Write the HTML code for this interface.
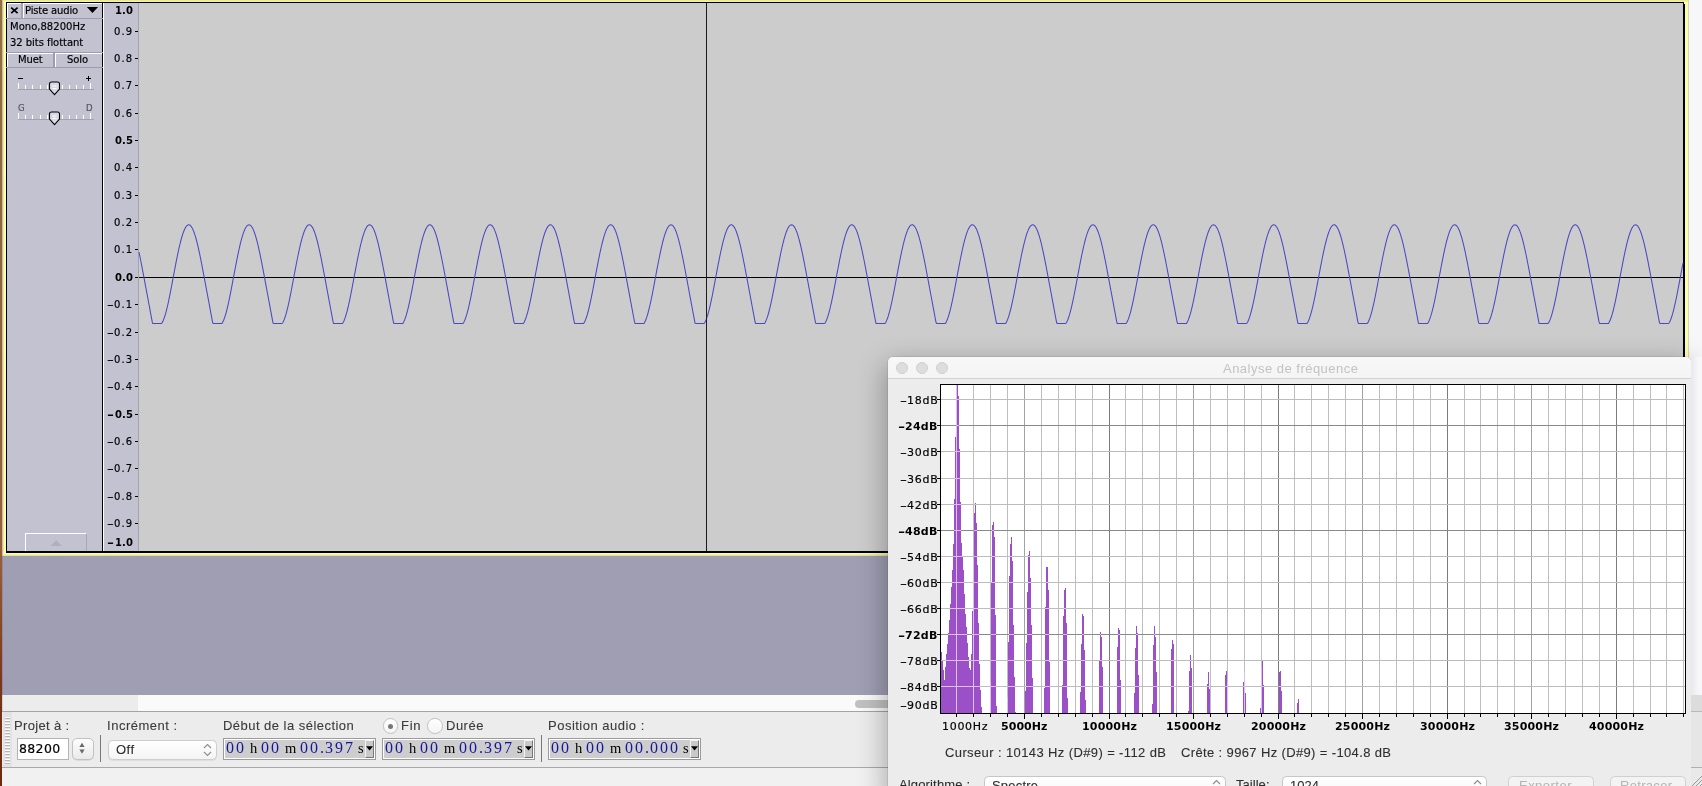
<!DOCTYPE html>
<html lang="fr"><head><meta charset="utf-8"><title>Audacity - Analyse de fréquence</title>
<style>
html,body{margin:0;padding:0}
body{width:1702px;height:786px;overflow:hidden;position:relative;background:#9f9eb3}
#app{position:absolute;left:0;top:0;width:1702px;height:786px;overflow:hidden}
#app div,#app svg,#app span{position:absolute}
#app span{white-space:pre;line-height:1;display:block;will-change:transform}
</style></head>
<body><div id="app">
<div style="left:0px;top:0px;width:2px;height:786px;background:linear-gradient(#96703c 0%,#8f6234 45%,#9a6038 70%,#7a3416 88%,#6e2810 100%)"></div>
<div style="left:2px;top:0px;width:1px;height:556px;background:#c4c0ac"></div>
<div style="left:2px;top:556px;width:1px;height:139px;background:#908b9e"></div>
<div style="left:2px;top:695px;width:1px;height:91px;background:#d2d2d4"></div>
<div style="left:3px;top:0px;width:1685px;height:556px;background:#ffffaa"></div>
<div style="left:3px;top:0px;width:1px;height:556px;background:#e6e6b4"></div>
<div style="left:3px;top:553px;width:1685px;height:3px;background:linear-gradient(#ffffb4,#f2f2a2 50%,#d8d89c)"></div>
<div style="left:3px;top:0px;width:1685px;height:2px;background:linear-gradient(#e4e48c,#fbfbaa)"></div>
<div style="left:6px;top:2px;width:1679px;height:551px;background:#000"></div>
<div style="left:7px;top:3px;width:95px;height:548px;background:#c3c2d0"></div>
<div style="left:103px;top:3px;width:1px;height:548px;background:#fff"></div>
<div style="left:104px;top:3px;width:34px;height:548px;background:#c3c2d0"></div>
<div style="left:138px;top:3px;width:1px;height:548px;background:#a4a3b0"></div>
<div style="left:139px;top:3px;width:1544px;height:548px;background:#cccccc"></div>
<div style="left:1684px;top:2px;width:1px;height:1.5px;background:#ffffaa"></div>
<div style="left:1688px;top:0px;width:14px;height:695px;background:#f7f7fa"></div>
<div style="left:1688px;top:0px;width:1px;height:556px;background:#d4d4c0"></div>
<div style="left:3px;top:556px;width:1685px;height:139px;background:#9f9eb3"></div>
<div style="left:3px;top:695px;width:135px;height:16px;background:#ececec"></div>
<div style="left:138px;top:695px;width:1550px;height:16px;background:#fafafa"></div>
<div style="left:855px;top:700px;width:60px;height:8px;background:#c1c1c1;border-radius:4px"></div>
<div style="left:1688px;top:695px;width:14px;height:16px;background:#dedede"></div>
<div style="left:2px;top:711px;width:1700px;height:1px;background:#a3a3a8"></div>
<div style="left:2px;top:712px;width:1700px;height:55px;background:#ececec"></div>
<div style="left:2px;top:767px;width:1700px;height:1px;background:#a9a9ad"></div>
<div style="left:2px;top:768px;width:1700px;height:18px;background:#f1f1f1"></div>
<div style="left:3px;top:712px;width:9px;height:55px;background:#e3e3e6"></div>
<div style="left:5px;top:717px;width:5px;height:1px;background:#fff"></div>
<div style="left:5px;top:718px;width:5px;height:1px;background:#b4b4ba"></div>
<div style="left:5px;top:720px;width:5px;height:1px;background:#fff"></div>
<div style="left:5px;top:721px;width:5px;height:1px;background:#b4b4ba"></div>
<div style="left:5px;top:723px;width:5px;height:1px;background:#fff"></div>
<div style="left:5px;top:724px;width:5px;height:1px;background:#b4b4ba"></div>
<div style="left:5px;top:726px;width:5px;height:1px;background:#fff"></div>
<div style="left:5px;top:727px;width:5px;height:1px;background:#b4b4ba"></div>
<div style="left:5px;top:729px;width:5px;height:1px;background:#fff"></div>
<div style="left:5px;top:730px;width:5px;height:1px;background:#b4b4ba"></div>
<div style="left:5px;top:732px;width:5px;height:1px;background:#fff"></div>
<div style="left:5px;top:733px;width:5px;height:1px;background:#b4b4ba"></div>
<div style="left:5px;top:735px;width:5px;height:1px;background:#fff"></div>
<div style="left:5px;top:736px;width:5px;height:1px;background:#b4b4ba"></div>
<div style="left:5px;top:738px;width:5px;height:1px;background:#fff"></div>
<div style="left:5px;top:739px;width:5px;height:1px;background:#b4b4ba"></div>
<div style="left:5px;top:741px;width:5px;height:1px;background:#fff"></div>
<div style="left:5px;top:742px;width:5px;height:1px;background:#b4b4ba"></div>
<div style="left:5px;top:744px;width:5px;height:1px;background:#fff"></div>
<div style="left:5px;top:745px;width:5px;height:1px;background:#b4b4ba"></div>
<div style="left:5px;top:747px;width:5px;height:1px;background:#fff"></div>
<div style="left:5px;top:748px;width:5px;height:1px;background:#b4b4ba"></div>
<div style="left:5px;top:750px;width:5px;height:1px;background:#fff"></div>
<div style="left:5px;top:751px;width:5px;height:1px;background:#b4b4ba"></div>
<div style="left:5px;top:753px;width:5px;height:1px;background:#fff"></div>
<div style="left:5px;top:754px;width:5px;height:1px;background:#b4b4ba"></div>
<div style="left:5px;top:756px;width:5px;height:1px;background:#fff"></div>
<div style="left:5px;top:757px;width:5px;height:1px;background:#b4b4ba"></div>
<div style="left:5px;top:759px;width:5px;height:1px;background:#fff"></div>
<div style="left:5px;top:760px;width:5px;height:1px;background:#b4b4ba"></div>
<div style="left:5px;top:762px;width:5px;height:1px;background:#fff"></div>
<div style="left:5px;top:763px;width:5px;height:1px;background:#b4b4ba"></div>
<div style="left:7px;top:3px;width:14px;height:15px;background:#c3c2d0;border-left:1px solid #fff;border-top:1px solid #fff;box-sizing:border-box"></div>
<div style="left:21px;top:3px;width:2px;height:15px;background:#a3a2b2"></div>
<div style="left:23px;top:3px;width:79px;height:15px;background:#c3c2d0;border-left:1px solid #fff;border-top:1px solid #fff;box-sizing:border-box"></div>
<div style="left:6px;top:17.5px;width:97px;height:1px;background:#9d9cac"></div>
<svg style="left:10px;top:6px" width="9" height="9" viewBox="0 0 9 9"><path d="M1.2 1.6 L7.6 7.2 M7.6 1.6 L1.2 7.2" stroke="#000" stroke-width="1.7" fill="none"/></svg>
<span id="t0" style="font-family:'DejaVu Sans', sans-serif;font-size:10px;font-weight:400;color:#000;letter-spacing:-0.157px;left:24.90px;top:5.60px;-webkit-text-stroke:0.18px #000;">Piste audio</span>
<svg style="left:86px;top:6px" width="13" height="8" viewBox="0 0 13 8"><path d="M0.8 1 L12.1 1 L6.45 7.1 Z" fill="#000"/></svg>
<span id="t1" style="font-family:'DejaVu Sans', sans-serif;font-size:10px;font-weight:400;color:#000;letter-spacing:0.021px;left:9.80px;top:22.20px;-webkit-text-stroke:0.18px #000;">Mono,88200Hz</span>
<span id="t2" style="font-family:'DejaVu Sans', sans-serif;font-size:10px;font-weight:400;color:#000;letter-spacing:-0.052px;left:9.80px;top:38.10px;-webkit-text-stroke:0.18px #000;">32 bits flottant</span>
<div style="left:6px;top:52px;width:97px;height:1px;background:#9d9cac"></div>
<div style="left:7px;top:53px;width:46px;height:14px;background:#c3c2d0;border-left:1px solid #fff;border-top:1px solid #fff;box-sizing:border-box"></div>
<div style="left:53px;top:53px;width:2px;height:15px;background:#9d9cac"></div>
<div style="left:55px;top:53px;width:47px;height:14px;background:#c3c2d0;border-left:1px solid #fff;border-top:1px solid #fff;box-sizing:border-box"></div>
<div style="left:6px;top:67px;width:97px;height:1px;background:#9d9cac"></div>
<span id="t3" style="font-family:'DejaVu Sans', sans-serif;font-size:10px;font-weight:400;color:#000;letter-spacing:-0.149px;left:17.80px;top:55.00px;-webkit-text-stroke:0.18px #000;">Muet</span>
<span id="t4" style="font-family:'DejaVu Sans', sans-serif;font-size:10px;font-weight:400;color:#000;letter-spacing:-0.058px;left:66.60px;top:55.00px;-webkit-text-stroke:0.18px #000;">Solo</span>
<div style="left:18px;top:89px;width:76px;height:1px;background:#a2a1ae"></div><div style="left:18px;top:83px;width:1px;height:6px;background:#fff"></div><div style="left:25px;top:85px;width:1px;height:4px;background:#fff"></div><div style="left:32px;top:85px;width:1px;height:4px;background:#fff"></div><div style="left:40px;top:85px;width:1px;height:4px;background:#fff"></div><div style="left:47px;top:85px;width:1px;height:4px;background:#fff"></div><div style="left:54px;top:85px;width:1px;height:4px;background:#fff"></div><div style="left:62px;top:85px;width:1px;height:4px;background:#fff"></div><div style="left:69px;top:85px;width:1px;height:4px;background:#fff"></div><div style="left:76px;top:85px;width:1px;height:4px;background:#fff"></div><div style="left:83px;top:85px;width:1px;height:4px;background:#fff"></div><div style="left:90px;top:83px;width:1px;height:6px;background:#fff"></div><svg style="left:48px;top:81px" width="13" height="15" viewBox="0 0 13 15"><path d="M1.5 3 Q1.5 1 3.5 1 L9.5 1 Q11.5 1 11.5 3 L11.5 8 L6.5 13.6 L1.5 8 Z" fill="#d9d8e4" stroke="#000" stroke-width="1.1"/><path d="M4.5 5 H8.5 M4.5 7.5 H8.5" stroke="#fff" stroke-width="1"/></svg>
<div style="left:18px;top:119px;width:76px;height:1px;background:#a2a1ae"></div><div style="left:18px;top:113px;width:1px;height:6px;background:#fff"></div><div style="left:25px;top:115px;width:1px;height:4px;background:#fff"></div><div style="left:32px;top:115px;width:1px;height:4px;background:#fff"></div><div style="left:40px;top:115px;width:1px;height:4px;background:#fff"></div><div style="left:47px;top:115px;width:1px;height:4px;background:#fff"></div><div style="left:54px;top:115px;width:1px;height:4px;background:#fff"></div><div style="left:62px;top:115px;width:1px;height:4px;background:#fff"></div><div style="left:69px;top:115px;width:1px;height:4px;background:#fff"></div><div style="left:76px;top:115px;width:1px;height:4px;background:#fff"></div><div style="left:83px;top:115px;width:1px;height:4px;background:#fff"></div><div style="left:90px;top:113px;width:1px;height:6px;background:#fff"></div><svg style="left:48px;top:111px" width="13" height="15" viewBox="0 0 13 15"><path d="M1.5 3 Q1.5 1 3.5 1 L9.5 1 Q11.5 1 11.5 3 L11.5 8 L6.5 13.6 L1.5 8 Z" fill="#d9d8e4" stroke="#000" stroke-width="1.1"/><path d="M4.5 5 H8.5 M4.5 7.5 H8.5" stroke="#fff" stroke-width="1"/></svg>
<div style="left:18px;top:77.8px;width:5px;height:1.2px;background:#000"></div>
<div style="left:86px;top:78px;width:5.2px;height:1.2px;background:#000"></div>
<div style="left:88px;top:76px;width:1.2px;height:5.2px;background:#000"></div>
<span id="t5" style="font-family:'DejaVu Sans', sans-serif;font-size:8.6px;font-weight:400;color:#55555f;left:18.00px;top:103.80px;-webkit-text-stroke:0.18px #55555f;">G</span>
<span id="t6" style="font-family:'DejaVu Sans', sans-serif;font-size:8.6px;font-weight:400;color:#55555f;left:85.60px;top:103.80px;-webkit-text-stroke:0.18px #55555f;">D</span>
<div style="left:25px;top:533px;width:62px;height:18px;background:#c3c2d0;border-left:1px solid #fff;border-top:1px solid #fff;border-right:1px solid #a9a8b6;box-sizing:border-box"></div>
<svg style="left:50px;top:540px" width="13" height="7" viewBox="0 0 13 7"><path d="M0.5 6 L12 6 L6.25 0.3 Z" fill="#b0afbf"/></svg>
<span id="t7" style="font-family:'DejaVu Sans', sans-serif;font-size:10px;font-weight:700;color:#000;letter-spacing:0.141px;left:114.50px;top:538.20px;">1.0</span>
<span id="t8" style="font-family:'DejaVu Sans', sans-serif;font-size:10px;font-weight:700;color:#000;transform-origin:0 50%;transform:scaleX(1.684);left:107.20px;top:538.20px;">-</span>
<div style="left:135px;top:523px;width:3px;height:1px;background:#000"></div>
<span id="t9" style="font-family:'DejaVu Sans', sans-serif;font-size:10px;font-weight:400;color:#000;letter-spacing:1.147px;left:113.90px;top:519.04px;-webkit-text-stroke:0.18px #000;">0.9</span>
<span id="t10" style="font-family:'DejaVu Sans', sans-serif;font-size:10px;font-weight:400;color:#000;transform-origin:0 50%;transform:scaleX(1.884);left:106.90px;top:519.04px;-webkit-text-stroke:0.18px #000;">-</span>
<div style="left:135px;top:496px;width:3px;height:1px;background:#000"></div>
<span id="t11" style="font-family:'DejaVu Sans', sans-serif;font-size:10px;font-weight:400;color:#000;letter-spacing:1.147px;left:113.90px;top:491.68px;-webkit-text-stroke:0.18px #000;">0.8</span>
<span id="t12" style="font-family:'DejaVu Sans', sans-serif;font-size:10px;font-weight:400;color:#000;transform-origin:0 50%;transform:scaleX(1.884);left:106.90px;top:491.68px;-webkit-text-stroke:0.18px #000;">-</span>
<div style="left:135px;top:468px;width:3px;height:1px;background:#000"></div>
<span id="t13" style="font-family:'DejaVu Sans', sans-serif;font-size:10px;font-weight:400;color:#000;letter-spacing:1.147px;left:113.90px;top:464.32px;-webkit-text-stroke:0.18px #000;">0.7</span>
<span id="t14" style="font-family:'DejaVu Sans', sans-serif;font-size:10px;font-weight:400;color:#000;transform-origin:0 50%;transform:scaleX(1.884);left:106.90px;top:464.32px;-webkit-text-stroke:0.18px #000;">-</span>
<div style="left:135px;top:441px;width:3px;height:1px;background:#000"></div>
<span id="t15" style="font-family:'DejaVu Sans', sans-serif;font-size:10px;font-weight:400;color:#000;letter-spacing:1.147px;left:113.90px;top:436.96px;-webkit-text-stroke:0.18px #000;">0.6</span>
<span id="t16" style="font-family:'DejaVu Sans', sans-serif;font-size:10px;font-weight:400;color:#000;transform-origin:0 50%;transform:scaleX(1.884);left:106.90px;top:436.96px;-webkit-text-stroke:0.18px #000;">-</span>
<div style="left:135px;top:414px;width:3px;height:1px;background:#000"></div>
<span id="t17" style="font-family:'DejaVu Sans', sans-serif;font-size:10px;font-weight:700;color:#000;letter-spacing:0.141px;left:114.50px;top:409.60px;">0.5</span>
<span id="t18" style="font-family:'DejaVu Sans', sans-serif;font-size:10px;font-weight:700;color:#000;transform-origin:0 50%;transform:scaleX(1.684);left:107.20px;top:409.60px;">-</span>
<div style="left:135px;top:386px;width:3px;height:1px;background:#000"></div>
<span id="t19" style="font-family:'DejaVu Sans', sans-serif;font-size:10px;font-weight:400;color:#000;letter-spacing:1.147px;left:113.90px;top:382.24px;-webkit-text-stroke:0.18px #000;">0.4</span>
<span id="t20" style="font-family:'DejaVu Sans', sans-serif;font-size:10px;font-weight:400;color:#000;transform-origin:0 50%;transform:scaleX(1.884);left:106.90px;top:382.24px;-webkit-text-stroke:0.18px #000;">-</span>
<div style="left:135px;top:359px;width:3px;height:1px;background:#000"></div>
<span id="t21" style="font-family:'DejaVu Sans', sans-serif;font-size:10px;font-weight:400;color:#000;letter-spacing:1.147px;left:113.90px;top:354.88px;-webkit-text-stroke:0.18px #000;">0.3</span>
<span id="t22" style="font-family:'DejaVu Sans', sans-serif;font-size:10px;font-weight:400;color:#000;transform-origin:0 50%;transform:scaleX(1.884);left:106.90px;top:354.88px;-webkit-text-stroke:0.18px #000;">-</span>
<div style="left:135px;top:332px;width:3px;height:1px;background:#000"></div>
<span id="t23" style="font-family:'DejaVu Sans', sans-serif;font-size:10px;font-weight:400;color:#000;letter-spacing:1.147px;left:113.90px;top:327.52px;-webkit-text-stroke:0.18px #000;">0.2</span>
<span id="t24" style="font-family:'DejaVu Sans', sans-serif;font-size:10px;font-weight:400;color:#000;transform-origin:0 50%;transform:scaleX(1.884);left:106.90px;top:327.52px;-webkit-text-stroke:0.18px #000;">-</span>
<div style="left:135px;top:304px;width:3px;height:1px;background:#000"></div>
<span id="t25" style="font-family:'DejaVu Sans', sans-serif;font-size:10px;font-weight:400;color:#000;letter-spacing:1.147px;left:113.90px;top:300.16px;-webkit-text-stroke:0.18px #000;">0.1</span>
<span id="t26" style="font-family:'DejaVu Sans', sans-serif;font-size:10px;font-weight:400;color:#000;transform-origin:0 50%;transform:scaleX(1.884);left:106.90px;top:300.16px;-webkit-text-stroke:0.18px #000;">-</span>
<div style="left:135px;top:277px;width:3px;height:1px;background:#000"></div>
<span id="t27" style="font-family:'DejaVu Sans', sans-serif;font-size:10px;font-weight:700;color:#000;letter-spacing:0.141px;left:114.50px;top:272.80px;">0.0</span>
<div style="left:135px;top:249px;width:3px;height:1px;background:#000"></div>
<span id="t28" style="font-family:'DejaVu Sans', sans-serif;font-size:10px;font-weight:400;color:#000;letter-spacing:1.147px;left:113.90px;top:245.44px;-webkit-text-stroke:0.18px #000;">0.1</span>
<div style="left:135px;top:222px;width:3px;height:1px;background:#000"></div>
<span id="t29" style="font-family:'DejaVu Sans', sans-serif;font-size:10px;font-weight:400;color:#000;letter-spacing:1.147px;left:113.90px;top:218.08px;-webkit-text-stroke:0.18px #000;">0.2</span>
<div style="left:135px;top:195px;width:3px;height:1px;background:#000"></div>
<span id="t30" style="font-family:'DejaVu Sans', sans-serif;font-size:10px;font-weight:400;color:#000;letter-spacing:1.147px;left:113.90px;top:190.72px;-webkit-text-stroke:0.18px #000;">0.3</span>
<div style="left:135px;top:167px;width:3px;height:1px;background:#000"></div>
<span id="t31" style="font-family:'DejaVu Sans', sans-serif;font-size:10px;font-weight:400;color:#000;letter-spacing:1.147px;left:113.90px;top:163.36px;-webkit-text-stroke:0.18px #000;">0.4</span>
<div style="left:135px;top:140px;width:3px;height:1px;background:#000"></div>
<span id="t32" style="font-family:'DejaVu Sans', sans-serif;font-size:10px;font-weight:700;color:#000;letter-spacing:0.141px;left:114.50px;top:136.00px;">0.5</span>
<div style="left:135px;top:113px;width:3px;height:1px;background:#000"></div>
<span id="t33" style="font-family:'DejaVu Sans', sans-serif;font-size:10px;font-weight:400;color:#000;letter-spacing:1.147px;left:113.90px;top:108.64px;-webkit-text-stroke:0.18px #000;">0.6</span>
<div style="left:135px;top:85px;width:3px;height:1px;background:#000"></div>
<span id="t34" style="font-family:'DejaVu Sans', sans-serif;font-size:10px;font-weight:400;color:#000;letter-spacing:1.147px;left:113.90px;top:81.28px;-webkit-text-stroke:0.18px #000;">0.7</span>
<div style="left:135px;top:58px;width:3px;height:1px;background:#000"></div>
<span id="t35" style="font-family:'DejaVu Sans', sans-serif;font-size:10px;font-weight:400;color:#000;letter-spacing:1.147px;left:113.90px;top:53.92px;-webkit-text-stroke:0.18px #000;">0.8</span>
<div style="left:135px;top:31px;width:3px;height:1px;background:#000"></div>
<span id="t36" style="font-family:'DejaVu Sans', sans-serif;font-size:10px;font-weight:400;color:#000;letter-spacing:1.147px;left:113.90px;top:26.56px;-webkit-text-stroke:0.18px #000;">0.9</span>
<span id="t37" style="font-family:'DejaVu Sans', sans-serif;font-size:10px;font-weight:700;color:#000;letter-spacing:0.141px;left:114.50px;top:6.10px;">1.0</span>
<svg style="left:0;top:0" width="1702" height="786" viewBox="0 0 1702 786"><rect x="139" y="277" width="1544" height="1" fill="#000" shape-rendering="crispEdges"/><polyline points="139.0,252.2 139.5,254.6 140.0,257.0 140.5,259.5 141.0,262.0 141.5,264.6 142.0,267.2 142.5,269.8 143.0,272.4 143.5,275.1 144.0,277.7 144.5,280.4 145.0,283.1 145.5,285.8 146.0,288.5 146.5,291.1 147.0,293.8 147.5,296.5 148.0,299.2 148.5,301.9 149.0,304.5 149.5,307.2 150.0,309.9 150.5,312.6 151.0,315.3 151.5,317.9 152.0,320.6 152.5,323.3 153.0,323.4 153.5,323.4 154.0,323.4 154.5,323.4 155.0,323.4 155.5,323.4 156.0,323.4 156.5,323.4 157.0,323.4 157.5,323.4 158.0,323.4 158.5,323.4 159.0,323.4 159.5,323.4 160.0,323.4 160.5,323.4 161.0,323.4 161.5,323.4 162.0,323.0 162.5,322.1 163.0,321.0 163.5,319.8 164.0,318.5 164.5,317.1 165.0,315.5 165.5,313.9 166.0,312.1 166.5,310.1 167.0,308.1 167.5,306.0 168.0,303.8 168.5,301.5 169.0,299.2 169.5,296.7 170.0,294.3 170.5,291.7 171.0,289.1 171.5,286.5 172.0,283.8 172.5,281.2 173.0,278.5 173.5,275.8 174.0,273.1 174.5,270.5 175.0,267.9 175.5,265.3 176.0,262.7 176.5,260.1 177.0,257.7 177.5,255.2 178.0,252.8 178.5,250.5 179.0,248.2 179.5,246.1 180.0,244.0 180.5,242.0 181.0,240.0 181.5,238.2 182.0,236.5 182.5,234.9 183.0,233.4 183.5,232.0 184.0,230.7 184.5,229.5 185.0,228.5 185.5,227.6 186.0,226.8 186.5,226.1 187.0,225.6 187.5,225.2 188.0,224.9 188.5,224.8 189.0,224.8 189.5,225.0 190.0,225.2 190.5,225.7 191.0,226.2 191.5,226.9 192.0,227.7 192.5,228.6 193.0,229.7 193.5,230.9 194.0,232.2 194.5,233.6 195.0,235.1 195.5,236.8 196.0,238.5 196.5,240.3 197.0,242.3 197.5,244.3 198.0,246.4 198.5,248.6 199.0,250.9 199.5,253.2 200.0,255.6 200.5,258.1 201.0,260.6 201.5,263.1 202.0,265.7 202.5,268.3 203.0,270.9 203.5,273.6 204.0,276.2 204.5,278.9 205.0,281.6 205.5,284.3 206.0,286.9 206.5,289.6 207.0,292.3 207.5,295.0 208.0,297.7 208.5,300.4 209.0,303.0 209.5,305.7 210.0,308.4 210.5,311.1 211.0,313.8 211.5,316.4 212.0,319.1 212.5,321.8 213.0,323.4 213.5,323.4 214.0,323.4 214.5,323.4 215.0,323.4 215.5,323.4 216.0,323.4 216.5,323.4 217.0,323.4 217.5,323.4 218.0,323.4 218.5,323.4 219.0,323.4 219.5,323.4 220.0,323.4 220.5,323.4 221.0,323.4 221.5,323.4 222.0,323.4 222.5,322.6 223.0,321.6 223.5,320.5 224.0,319.3 224.5,317.9 225.0,316.4 225.5,314.8 226.0,313.1 226.5,311.2 227.0,309.3 227.5,307.2 228.0,305.1 228.5,302.8 229.0,300.5 229.5,298.1 230.0,295.7 230.5,293.2 231.0,290.6 231.5,288.0 232.0,285.3 232.5,282.7 233.0,280.0 233.5,277.3 234.0,274.6 234.5,272.0 235.0,269.3 235.5,266.7 236.0,264.1 236.5,261.6 237.0,259.1 237.5,256.6 238.0,254.2 238.5,251.8 239.0,249.5 239.5,247.3 240.0,245.1 240.5,243.1 241.0,241.1 241.5,239.2 242.0,237.4 242.5,235.8 243.0,234.2 243.5,232.7 244.0,231.4 244.5,230.2 245.0,229.0 245.5,228.1 246.0,227.2 246.5,226.5 247.0,225.9 247.5,225.4 248.0,225.1 248.5,224.9 249.0,224.8 249.5,224.9 250.0,225.1 250.5,225.4 251.0,225.9 251.5,226.5 252.0,227.2 252.5,228.1 253.0,229.1 253.5,230.2 254.0,231.4 254.5,232.8 255.0,234.2 255.5,235.8 256.0,237.5 256.5,239.3 257.0,241.2 257.5,243.2 258.0,245.2 258.5,247.4 259.0,249.6 259.5,251.9 260.0,254.2 260.5,256.7 261.0,259.1 261.5,261.7 262.0,264.2 262.5,266.8 263.0,269.4 263.5,272.1 264.0,274.7 264.5,277.4 265.0,280.1 265.5,282.8 266.0,285.4 266.5,288.1 267.0,290.8 267.5,293.5 268.0,296.2 268.5,298.8 269.0,301.5 269.5,304.2 270.0,306.9 270.5,309.6 271.0,312.2 271.5,314.9 272.0,317.6 272.5,320.3 273.0,323.0 273.5,323.4 274.0,323.4 274.5,323.4 275.0,323.4 275.5,323.4 276.0,323.4 276.5,323.4 277.0,323.4 277.5,323.4 278.0,323.4 278.5,323.4 279.0,323.4 279.5,323.4 280.0,323.4 280.5,323.4 281.0,323.4 281.5,323.4 282.0,323.4 282.5,323.1 283.0,322.2 283.5,321.2 284.0,320.0 284.5,318.7 285.0,317.3 285.5,315.8 286.0,314.1 286.5,312.3 287.0,310.4 287.5,308.4 288.0,306.3 288.5,304.1 289.0,301.8 289.5,299.5 290.0,297.1 290.5,294.6 291.0,292.0 291.5,289.5 292.0,286.8 292.5,284.2 293.0,281.5 293.5,278.8 294.0,276.1 294.5,273.5 295.0,270.8 295.5,268.2 296.0,265.6 296.5,263.0 297.0,260.5 297.5,258.0 298.0,255.5 298.5,253.1 299.0,250.8 299.5,248.5 300.0,246.4 300.5,244.2 301.0,242.2 301.5,240.3 302.0,238.4 302.5,236.7 303.0,235.1 303.5,233.5 304.0,232.1 304.5,230.8 305.0,229.7 305.5,228.6 306.0,227.7 306.5,226.9 307.0,226.2 307.5,225.6 308.0,225.2 308.5,225.0 309.0,224.8 309.5,224.8 310.0,224.9 310.5,225.2 311.0,225.6 311.5,226.1 312.0,226.8 312.5,227.6 313.0,228.5 313.5,229.5 314.0,230.7 314.5,232.0 315.0,233.4 315.5,234.9 316.0,236.5 316.5,238.3 317.0,240.1 317.5,242.0 318.0,244.0 318.5,246.1 319.0,248.3 319.5,250.6 320.0,252.9 320.5,255.3 321.0,257.7 321.5,260.2 322.0,262.8 322.5,265.3 323.0,267.9 323.5,270.6 324.0,273.2 324.5,275.9 325.0,278.6 325.5,281.2 326.0,283.9 326.5,286.6 327.0,289.3 327.5,292.0 328.0,294.6 328.5,297.3 329.0,300.0 329.5,302.7 330.0,305.4 330.5,308.0 331.0,310.7 331.5,313.4 332.0,316.1 332.5,318.8 333.0,321.4 333.5,323.4 334.0,323.4 334.5,323.4 335.0,323.4 335.5,323.4 336.0,323.4 336.5,323.4 337.0,323.4 337.5,323.4 338.0,323.4 338.5,323.4 339.0,323.4 339.5,323.4 340.0,323.4 340.5,323.4 341.0,323.4 341.5,323.4 342.0,323.4 342.5,323.4 343.0,322.7 343.5,321.8 344.0,320.7 344.5,319.5 345.0,318.1 345.5,316.6 346.0,315.0 346.5,313.3 347.0,311.5 347.5,309.5 348.0,307.5 348.5,305.4 349.0,303.1 349.5,300.8 350.0,298.4 350.5,296.0 351.0,293.5 351.5,290.9 352.0,288.3 352.5,285.7 353.0,283.0 353.5,280.3 354.0,277.7 354.5,275.0 355.0,272.3 355.5,269.7 356.0,267.1 356.5,264.5 357.0,261.9 357.5,259.4 358.0,256.9 358.5,254.5 359.0,252.1 359.5,249.8 360.0,247.6 360.5,245.4 361.0,243.4 361.5,241.4 362.0,239.5 362.5,237.7 363.0,236.0 363.5,234.4 364.0,232.9 364.5,231.6 365.0,230.3 365.5,229.2 366.0,228.2 366.5,227.3 367.0,226.6 367.5,225.9 368.0,225.5 368.5,225.1 369.0,224.9 369.5,224.8 370.0,224.9 370.5,225.0 371.0,225.4 371.5,225.8 372.0,226.4 372.5,227.1 373.0,228.0 373.5,228.9 374.0,230.0 374.5,231.3 375.0,232.6 375.5,234.0 376.0,235.6 376.5,237.3 377.0,239.1 377.5,240.9 378.0,242.9 378.5,244.9 379.0,247.1 379.5,249.3 380.0,251.6 380.5,253.9 381.0,256.3 381.5,258.8 382.0,261.3 382.5,263.9 383.0,266.5 383.5,269.1 384.0,271.7 384.5,274.4 385.0,277.0 385.5,279.7 386.0,282.4 386.5,285.1 387.0,287.8 387.5,290.4 388.0,293.1 388.5,295.8 389.0,298.5 389.5,301.2 390.0,303.8 390.5,306.5 391.0,309.2 391.5,311.9 392.0,314.6 392.5,317.2 393.0,319.9 393.5,322.6 394.0,323.4 394.5,323.4 395.0,323.4 395.5,323.4 396.0,323.4 396.5,323.4 397.0,323.4 397.5,323.4 398.0,323.4 398.5,323.4 399.0,323.4 399.5,323.4 400.0,323.4 400.5,323.4 401.0,323.4 401.5,323.4 402.0,323.4 402.5,323.4 403.0,323.2 403.5,322.3 404.0,321.3 404.5,320.2 405.0,318.9 405.5,317.5 406.0,316.0 406.5,314.3 407.0,312.5 407.5,310.7 408.0,308.7 408.5,306.6 409.0,304.4 409.5,302.1 410.0,299.8 410.5,297.4 411.0,294.9 411.5,292.4 412.0,289.8 412.5,287.2 413.0,284.5 413.5,281.9 414.0,279.2 414.5,276.5 415.0,273.8 415.5,271.2 416.0,268.6 416.5,265.9 417.0,263.4 417.5,260.8 418.0,258.3 418.5,255.8 419.0,253.4 419.5,251.1 420.0,248.8 420.5,246.6 421.0,244.5 421.5,242.5 422.0,240.5 422.5,238.7 423.0,236.9 423.5,235.3 424.0,233.7 424.5,232.3 425.0,231.0 425.5,229.8 426.0,228.7 426.5,227.8 427.0,227.0 427.5,226.3 428.0,225.7 428.5,225.3 429.0,225.0 429.5,224.8 430.0,224.8 430.5,224.9 431.0,225.2 431.5,225.5 432.0,226.1 432.5,226.7 433.0,227.5 433.5,228.4 434.0,229.4 434.5,230.6 435.0,231.8 435.5,233.2 436.0,234.7 436.5,236.3 437.0,238.0 437.5,239.9 438.0,241.8 438.5,243.8 439.0,245.9 439.5,248.0 440.0,250.3 440.5,252.6 441.0,255.0 441.5,257.4 442.0,259.9 442.5,262.4 443.0,265.0 443.5,267.6 444.0,270.2 444.5,272.9 445.0,275.5 445.5,278.2 446.0,280.9 446.5,283.6 447.0,286.2 447.5,288.9 448.0,291.6 448.5,294.3 449.0,297.0 449.5,299.6 450.0,302.3 450.5,305.0 451.0,307.7 451.5,310.4 452.0,313.0 452.5,315.7 453.0,318.4 453.5,321.1 454.0,323.4 454.5,323.4 455.0,323.4 455.5,323.4 456.0,323.4 456.5,323.4 457.0,323.4 457.5,323.4 458.0,323.4 458.5,323.4 459.0,323.4 459.5,323.4 460.0,323.4 460.5,323.4 461.0,323.4 461.5,323.4 462.0,323.4 462.5,323.4 463.0,323.4 463.5,322.8 464.0,321.9 464.5,320.8 465.0,319.6 465.5,318.3 466.0,316.8 466.5,315.3 467.0,313.6 467.5,311.7 468.0,309.8 468.5,307.8 469.0,305.7 469.5,303.4 470.0,301.1 470.5,298.8 471.0,296.3 471.5,293.8 472.0,291.3 472.5,288.7 473.0,286.0 473.5,283.4 474.0,280.7 474.5,278.0 475.0,275.3 475.5,272.7 476.0,270.0 476.5,267.4 477.0,264.8 477.5,262.2 478.0,259.7 478.5,257.2 479.0,254.8 479.5,252.4 480.0,250.1 480.5,247.9 481.0,245.7 481.5,243.6 482.0,241.6 482.5,239.7 483.0,237.9 483.5,236.2 484.0,234.6 484.5,233.1 485.0,231.7 485.5,230.5 486.0,229.3 486.5,228.3 487.0,227.4 487.5,226.6 488.0,226.0 488.5,225.5 489.0,225.1 489.5,224.9 490.0,224.8 490.5,224.8 491.0,225.0 491.5,225.3 492.0,225.7 492.5,226.3 493.0,227.0 493.5,227.8 494.0,228.8 494.5,229.9 495.0,231.1 495.5,232.4 496.0,233.8 496.5,235.4 497.0,237.1 497.5,238.8 498.0,240.7 498.5,242.6 499.0,244.7 499.5,246.8 500.0,249.0 500.5,251.3 501.0,253.6 501.5,256.0 502.0,258.5 502.5,261.0 503.0,263.5 503.5,266.1 504.0,268.7 504.5,271.4 505.0,274.0 505.5,276.7 506.0,279.4 506.5,282.0 507.0,284.7 507.5,287.4 508.0,290.1 508.5,292.8 509.0,295.4 509.5,298.1 510.0,300.8 510.5,303.5 511.0,306.2 511.5,308.8 512.0,311.5 512.5,314.2 513.0,316.9 513.5,319.6 514.0,322.2 514.5,323.4 515.0,323.4 515.5,323.4 516.0,323.4 516.5,323.4 517.0,323.4 517.5,323.4 518.0,323.4 518.5,323.4 519.0,323.4 519.5,323.4 520.0,323.4 520.5,323.4 521.0,323.4 521.5,323.4 522.0,323.4 522.5,323.4 523.0,323.4 523.5,323.3 524.0,322.4 524.5,321.5 525.0,320.3 525.5,319.1 526.0,317.7 526.5,316.2 527.0,314.5 527.5,312.8 528.0,310.9 528.5,308.9 529.0,306.9 529.5,304.7 530.0,302.4 530.5,300.1 531.0,297.7 531.5,295.2 532.0,292.7 532.5,290.1 533.0,287.5 533.5,284.9 534.0,282.2 534.5,279.5 535.0,276.8 535.5,274.2 536.0,271.5 536.5,268.9 537.0,266.3 537.5,263.7 538.0,261.1 538.5,258.6 539.0,256.2 539.5,253.8 540.0,251.4 540.5,249.1 541.0,246.9 541.5,244.8 542.0,242.7 542.5,240.8 543.0,238.9 543.5,237.2 544.0,235.5 544.5,233.9 545.0,232.5 545.5,231.2 546.0,230.0 546.5,228.9 547.0,227.9 547.5,227.1 548.0,226.4 548.5,225.8 549.0,225.3 549.5,225.0 550.0,224.8 550.5,224.8 551.0,224.9 551.5,225.1 552.0,225.5 552.5,226.0 553.0,226.6 553.5,227.4 554.0,228.2 554.5,229.3 555.0,230.4 555.5,231.6 556.0,233.0 556.5,234.5 557.0,236.1 557.5,237.8 558.0,239.6 558.5,241.5 559.0,243.5 559.5,245.6 560.0,247.7 560.5,250.0 561.0,252.3 561.5,254.7 562.0,257.1 562.5,259.6 563.0,262.1 563.5,264.7 564.0,267.3 564.5,269.9 565.0,272.5 565.5,275.2 566.0,277.8 566.5,280.5 567.0,283.2 567.5,285.9 568.0,288.6 568.5,291.2 569.0,293.9 569.5,296.6 570.0,299.3 570.5,302.0 571.0,304.6 571.5,307.3 572.0,310.0 572.5,312.7 573.0,315.4 573.5,318.1 574.0,320.7 574.5,323.4 575.0,323.4 575.5,323.4 576.0,323.4 576.5,323.4 577.0,323.4 577.5,323.4 578.0,323.4 578.5,323.4 579.0,323.4 579.5,323.4 580.0,323.4 580.5,323.4 581.0,323.4 581.5,323.4 582.0,323.4 582.5,323.4 583.0,323.4 583.5,323.4 584.0,322.9 584.5,322.0 585.0,321.0 585.5,319.8 586.0,318.5 586.5,317.0 587.0,315.5 587.5,313.8 588.0,312.0 588.5,310.1 589.0,308.1 589.5,305.9 590.0,303.7 590.5,301.4 591.0,299.1 591.5,296.7 592.0,294.2 592.5,291.6 593.0,289.0 593.5,286.4 594.0,283.7 594.5,281.1 595.0,278.4 595.5,275.7 596.0,273.0 596.5,270.4 597.0,267.8 597.5,265.2 598.0,262.6 598.5,260.0 599.0,257.6 599.5,255.1 600.0,252.7 600.5,250.4 601.0,248.2 601.5,246.0 602.0,243.9 602.5,241.9 603.0,240.0 603.5,238.1 604.0,236.4 604.5,234.8 605.0,233.3 605.5,231.9 606.0,230.6 606.5,229.5 607.0,228.4 607.5,227.5 608.0,226.7 608.5,226.1 609.0,225.6 609.5,225.2 610.0,224.9 610.5,224.8 611.0,224.8 611.5,225.0 612.0,225.3 612.5,225.7 613.0,226.2 613.5,226.9 614.0,227.7 614.5,228.7 615.0,229.7 615.5,230.9 616.0,232.2 616.5,233.7 617.0,235.2 617.5,236.8 618.0,238.6 618.5,240.4 619.0,242.4 619.5,244.4 620.0,246.5 620.5,248.7 621.0,251.0 621.5,253.3 622.0,255.7 622.5,258.2 623.0,260.7 623.5,263.2 624.0,265.8 624.5,268.4 625.0,271.0 625.5,273.7 626.0,276.3 626.5,279.0 627.0,281.7 627.5,284.4 628.0,287.1 628.5,289.7 629.0,292.4 629.5,295.1 630.0,297.8 630.5,300.5 631.0,303.1 631.5,305.8 632.0,308.5 632.5,311.2 633.0,313.9 633.5,316.5 634.0,319.2 634.5,321.9 635.0,323.4 635.5,323.4 636.0,323.4 636.5,323.4 637.0,323.4 637.5,323.4 638.0,323.4 638.5,323.4 639.0,323.4 639.5,323.4 640.0,323.4 640.5,323.4 641.0,323.4 641.5,323.4 642.0,323.4 642.5,323.4 643.0,323.4 643.5,323.4 644.0,323.4 644.5,322.6 645.0,321.6 645.5,320.5 646.0,319.2 646.5,317.9 647.0,316.4 647.5,314.8 648.0,313.0 648.5,311.2 649.0,309.2 649.5,307.1 650.0,305.0 650.5,302.8 651.0,300.4 651.5,298.0 652.0,295.6 652.5,293.1 653.0,290.5 653.5,287.9 654.0,285.2 654.5,282.6 655.0,279.9 655.5,277.2 656.0,274.5 656.5,271.9 657.0,269.2 657.5,266.6 658.0,264.0 658.5,261.5 659.0,259.0 659.5,256.5 660.0,254.1 660.5,251.7 661.0,249.4 661.5,247.2 662.0,245.1 662.5,243.0 663.0,241.0 663.5,239.2 664.0,237.4 664.5,235.7 665.0,234.1 665.5,232.7 666.0,231.3 666.5,230.1 667.0,229.0 667.5,228.0 668.0,227.2 668.5,226.4 669.0,225.8 669.5,225.4 670.0,225.1 670.5,224.9 671.0,224.8 671.5,224.9 672.0,225.1 672.5,225.4 673.0,225.9 673.5,226.5 674.0,227.3 674.5,228.1 675.0,229.1 675.5,230.2 676.0,231.5 676.5,232.8 677.0,234.3 677.5,235.9 678.0,237.6 678.5,239.4 679.0,241.3 679.5,243.2 680.0,245.3 680.5,247.5 681.0,249.7 681.5,252.0 682.0,254.3 682.5,256.8 683.0,259.2 683.5,261.8 684.0,264.3 684.5,266.9 685.0,269.5 685.5,272.2 686.0,274.8 686.5,277.5 687.0,280.2 687.5,282.9 688.0,285.5 688.5,288.2 689.0,290.9 689.5,293.6 690.0,296.3 690.5,298.9 691.0,301.6 691.5,304.3 692.0,307.0 692.5,309.7 693.0,312.3 693.5,315.0 694.0,317.7 694.5,320.4 695.0,323.1 695.5,323.4 696.0,323.4 696.5,323.4 697.0,323.4 697.5,323.4 698.0,323.4 698.5,323.4 699.0,323.4 699.5,323.4 700.0,323.4 700.5,323.4 701.0,323.4 701.5,323.4 702.0,323.4 702.5,323.4 703.0,323.4 703.5,323.4 704.0,323.4 704.5,323.0 705.0,322.2 705.5,321.1 706.0,320.0 706.5,318.7 707.0,317.2 707.5,315.7 708.0,314.0 708.5,312.2 709.0,310.3 709.5,308.3 710.0,306.2 710.5,304.0 711.0,301.8 711.5,299.4 712.0,297.0 712.5,294.5 713.0,291.9 713.5,289.4 714.0,286.7 714.5,284.1 715.0,281.4 715.5,278.7 716.0,276.0 716.5,273.4 717.0,270.7 717.5,268.1 718.0,265.5 718.5,262.9 719.0,260.4 719.5,257.9 720.0,255.4 720.5,253.0 721.0,250.7 721.5,248.5 722.0,246.3 722.5,244.2 723.0,242.1 723.5,240.2 724.0,238.4 724.5,236.6 725.0,235.0 725.5,233.5 726.0,232.1 726.5,230.8 727.0,229.6 727.5,228.6 728.0,227.6 728.5,226.8 729.0,226.2 729.5,225.6 730.0,225.2 730.5,225.0 731.0,224.8 731.5,224.8 732.0,224.9 732.5,225.2 733.0,225.6 733.5,226.2 734.0,226.8 734.5,227.6 735.0,228.5 735.5,229.6 736.0,230.8 736.5,232.0 737.0,233.5 737.5,235.0 738.0,236.6 738.5,238.3 739.0,240.2 739.5,242.1 740.0,244.1 740.5,246.2 741.0,248.4 741.5,250.7 742.0,253.0 742.5,255.4 743.0,257.8 743.5,260.3 744.0,262.9 744.5,265.4 745.0,268.0 745.5,270.7 746.0,273.3 746.5,276.0 747.0,278.7 747.5,281.3 748.0,284.0 748.5,286.7 749.0,289.4 749.5,292.1 750.0,294.7 750.5,297.4 751.0,300.1 751.5,302.8 752.0,305.5 752.5,308.1 753.0,310.8 753.5,313.5 754.0,316.2 754.5,318.9 755.0,321.5 755.5,323.4 756.0,323.4 756.5,323.4 757.0,323.4 757.5,323.4 758.0,323.4 758.5,323.4 759.0,323.4 759.5,323.4 760.0,323.4 760.5,323.4 761.0,323.4 761.5,323.4 762.0,323.4 762.5,323.4 763.0,323.4 763.5,323.4 764.0,323.4 764.5,323.4 765.0,322.7 765.5,321.7 766.0,320.6 766.5,319.4 767.0,318.1 767.5,316.6 768.0,315.0 768.5,313.3 769.0,311.4 769.5,309.5 770.0,307.4 770.5,305.3 771.0,303.1 771.5,300.7 772.0,298.4 772.5,295.9 773.0,293.4 773.5,290.8 774.0,288.2 774.5,285.6 775.0,282.9 775.5,280.2 776.0,277.6 776.5,274.9 777.0,272.2 777.5,269.6 778.0,267.0 778.5,264.4 779.0,261.8 779.5,259.3 780.0,256.8 780.5,254.4 781.0,252.0 781.5,249.7 782.0,247.5 782.5,245.3 783.0,243.3 783.5,241.3 784.0,239.4 784.5,237.6 785.0,235.9 785.5,234.3 786.0,232.9 786.5,231.5 787.0,230.3 787.5,229.1 788.0,228.1 788.5,227.3 789.0,226.5 789.5,225.9 790.0,225.4 790.5,225.1 791.0,224.9 791.5,224.8 792.0,224.9 792.5,225.0 793.0,225.4 793.5,225.8 794.0,226.4 794.5,227.1 795.0,228.0 795.5,229.0 796.0,230.1 796.5,231.3 797.0,232.6 797.5,234.1 798.0,235.7 798.5,237.3 799.0,239.1 799.5,241.0 800.0,243.0 800.5,245.0 801.0,247.2 801.5,249.4 802.0,251.7 802.5,254.0 803.0,256.4 803.5,258.9 804.0,261.4 804.5,264.0 805.0,266.6 805.5,269.2 806.0,271.8 806.5,274.5 807.0,277.1 807.5,279.8 808.0,282.5 808.5,285.2 809.0,287.9 809.5,290.5 810.0,293.2 810.5,295.9 811.0,298.6 811.5,301.3 812.0,303.9 812.5,306.6 813.0,309.3 813.5,312.0 814.0,314.7 814.5,317.3 815.0,320.0 815.5,322.7 816.0,323.4 816.5,323.4 817.0,323.4 817.5,323.4 818.0,323.4 818.5,323.4 819.0,323.4 819.5,323.4 820.0,323.4 820.5,323.4 821.0,323.4 821.5,323.4 822.0,323.4 822.5,323.4 823.0,323.4 823.5,323.4 824.0,323.4 824.5,323.4 825.0,323.1 825.5,322.3 826.0,321.3 826.5,320.1 827.0,318.8 827.5,317.4 828.0,315.9 828.5,314.2 829.0,312.5 829.5,310.6 830.0,308.6 830.5,306.5 831.0,304.3 831.5,302.1 832.0,299.7 832.5,297.3 833.0,294.8 833.5,292.3 834.0,289.7 834.5,287.1 835.0,284.4 835.5,281.8 836.0,279.1 836.5,276.4 837.0,273.7 837.5,271.1 838.0,268.5 838.5,265.8 839.0,263.3 839.5,260.7 840.0,258.2 840.5,255.8 841.0,253.4 841.5,251.0 842.0,248.8 842.5,246.6 843.0,244.4 843.5,242.4 844.0,240.5 844.5,238.6 845.0,236.9 845.5,235.2 846.0,233.7 846.5,232.3 847.0,231.0 847.5,229.8 848.0,228.7 848.5,227.7 849.0,226.9 849.5,226.2 850.0,225.7 850.5,225.3 851.0,225.0 851.5,224.8 852.0,224.8 852.5,224.9 853.0,225.2 853.5,225.6 854.0,226.1 854.5,226.7 855.0,227.5 855.5,228.4 856.0,229.4 856.5,230.6 857.0,231.9 857.5,233.3 858.0,234.8 858.5,236.4 859.0,238.1 859.5,239.9 860.0,241.8 860.5,243.8 861.0,245.9 861.5,248.1 862.0,250.4 862.5,252.7 863.0,255.1 863.5,257.5 864.0,260.0 864.5,262.5 865.0,265.1 865.5,267.7 866.0,270.3 866.5,273.0 867.0,275.6 867.5,278.3 868.0,281.0 868.5,283.7 869.0,286.3 869.5,289.0 870.0,291.7 870.5,294.4 871.0,297.1 871.5,299.7 872.0,302.4 872.5,305.1 873.0,307.8 873.5,310.5 874.0,313.1 874.5,315.8 875.0,318.5 875.5,321.2 876.0,323.4 876.5,323.4 877.0,323.4 877.5,323.4 878.0,323.4 878.5,323.4 879.0,323.4 879.5,323.4 880.0,323.4 880.5,323.4 881.0,323.4 881.5,323.4 882.0,323.4 882.5,323.4 883.0,323.4 883.5,323.4 884.0,323.4 884.5,323.4 885.0,323.4 885.5,322.8 886.0,321.9 886.5,320.8 887.0,319.6 887.5,318.3 888.0,316.8 888.5,315.2 889.0,313.5 889.5,311.7 890.0,309.7 890.5,307.7 891.0,305.6 891.5,303.4 892.0,301.0 892.5,298.7 893.0,296.2 893.5,293.7 894.0,291.2 894.5,288.6 895.0,285.9 895.5,283.3 896.0,280.6 896.5,277.9 897.0,275.2 897.5,272.6 898.0,269.9 898.5,267.3 899.0,264.7 899.5,262.2 900.0,259.6 900.5,257.1 901.0,254.7 901.5,252.3 902.0,250.0 902.5,247.8 903.0,245.6 903.5,243.5 904.0,241.6 904.5,239.6 905.0,237.8 905.5,236.1 906.0,234.5 906.5,233.1 907.0,231.7 907.5,230.4 908.0,229.3 908.5,228.3 909.0,227.4 909.5,226.6 910.0,226.0 910.5,225.5 911.0,225.1 911.5,224.9 912.0,224.8 912.5,224.8 913.0,225.0 913.5,225.3 914.0,225.8 914.5,226.3 915.0,227.0 915.5,227.9 916.0,228.8 916.5,229.9 917.0,231.1 917.5,232.5 918.0,233.9 918.5,235.5 919.0,237.1 919.5,238.9 920.0,240.7 920.5,242.7 921.0,244.7 921.5,246.9 922.0,249.1 922.5,251.4 923.0,253.7 923.5,256.1 924.0,258.6 924.5,261.1 925.0,263.6 925.5,266.2 926.0,268.8 926.5,271.5 927.0,274.1 927.5,276.8 928.0,279.5 928.5,282.1 929.0,284.8 929.5,287.5 930.0,290.2 930.5,292.9 931.0,295.5 931.5,298.2 932.0,300.9 932.5,303.6 933.0,306.3 933.5,308.9 934.0,311.6 934.5,314.3 935.0,317.0 935.5,319.7 936.0,322.3 936.5,323.4 937.0,323.4 937.5,323.4 938.0,323.4 938.5,323.4 939.0,323.4 939.5,323.4 940.0,323.4 940.5,323.4 941.0,323.4 941.5,323.4 942.0,323.4 942.5,323.4 943.0,323.4 943.5,323.4 944.0,323.4 944.5,323.4 945.0,323.4 945.5,323.2 946.0,322.4 946.5,321.4 947.0,320.3 947.5,319.0 948.0,317.6 948.5,316.1 949.0,314.5 949.5,312.7 950.0,310.8 950.5,308.9 951.0,306.8 951.5,304.6 952.0,302.4 952.5,300.0 953.0,297.6 953.5,295.2 954.0,292.6 954.5,290.1 955.0,287.4 955.5,284.8 956.0,282.1 956.5,279.4 957.0,276.7 957.5,274.1 958.0,271.4 958.5,268.8 959.0,266.2 959.5,263.6 960.0,261.0 960.5,258.5 961.0,256.1 961.5,253.7 962.0,251.3 962.5,249.0 963.0,246.8 963.5,244.7 964.0,242.7 964.5,240.7 965.0,238.9 965.5,237.1 966.0,235.4 966.5,233.9 967.0,232.4 967.5,231.1 968.0,229.9 968.5,228.8 969.0,227.9 969.5,227.0 970.0,226.3 970.5,225.8 971.0,225.3 971.5,225.0 972.0,224.8 972.5,224.8 973.0,224.9 973.5,225.1 974.0,225.5 974.5,226.0 975.0,226.6 975.5,227.4 976.0,228.3 976.5,229.3 977.0,230.4 977.5,231.7 978.0,233.1 978.5,234.6 979.0,236.2 979.5,237.9 980.0,239.7 980.5,241.6 981.0,243.6 981.5,245.7 982.0,247.8 982.5,250.1 983.0,252.4 983.5,254.7 984.0,257.2 984.5,259.7 985.0,262.2 985.5,264.8 986.0,267.4 986.5,270.0 987.0,272.6 987.5,275.3 988.0,277.9 988.5,280.6 989.0,283.3 989.5,286.0 990.0,288.7 990.5,291.3 991.0,294.0 991.5,296.7 992.0,299.4 992.5,302.1 993.0,304.8 993.5,307.4 994.0,310.1 994.5,312.8 995.0,315.5 995.5,318.2 996.0,320.8 996.5,323.4 997.0,323.4 997.5,323.4 998.0,323.4 998.5,323.4 999.0,323.4 999.5,323.4 1000.0,323.4 1000.5,323.4 1001.0,323.4 1001.5,323.4 1002.0,323.4 1002.5,323.4 1003.0,323.4 1003.5,323.4 1004.0,323.4 1004.5,323.4 1005.0,323.4 1005.5,323.4 1006.0,322.9 1006.5,322.0 1007.0,320.9 1007.5,319.8 1008.0,318.4 1008.5,317.0 1009.0,315.4 1009.5,313.7 1010.0,311.9 1010.5,310.0 1011.0,308.0 1011.5,305.9 1012.0,303.6 1012.5,301.4 1013.0,299.0 1013.5,296.6 1014.0,294.1 1014.5,291.5 1015.0,288.9 1015.5,286.3 1016.0,283.6 1016.5,281.0 1017.0,278.3 1017.5,275.6 1018.0,272.9 1018.5,270.3 1019.0,267.7 1019.5,265.1 1020.0,262.5 1020.5,260.0 1021.0,257.5 1021.5,255.0 1022.0,252.6 1022.5,250.3 1023.0,248.1 1023.5,245.9 1024.0,243.8 1024.5,241.8 1025.0,239.9 1025.5,238.1 1026.0,236.4 1026.5,234.7 1027.0,233.2 1027.5,231.9 1028.0,230.6 1028.5,229.4 1029.0,228.4 1029.5,227.5 1030.0,226.7 1030.5,226.1 1031.0,225.6 1031.5,225.2 1032.0,224.9 1032.5,224.8 1033.0,224.8 1033.5,225.0 1034.0,225.3 1034.5,225.7 1035.0,226.3 1035.5,226.9 1036.0,227.8 1036.5,228.7 1037.0,229.8 1037.5,231.0 1038.0,232.3 1038.5,233.7 1039.0,235.2 1039.5,236.9 1040.0,238.6 1040.5,240.5 1041.0,242.4 1041.5,244.5 1042.0,246.6 1042.5,248.8 1043.0,251.1 1043.5,253.4 1044.0,255.8 1044.5,258.3 1045.0,260.8 1045.5,263.3 1046.0,265.9 1046.5,268.5 1047.0,271.1 1047.5,273.8 1048.0,276.4 1048.5,279.1 1049.0,281.8 1049.5,284.5 1050.0,287.2 1050.5,289.8 1051.0,292.5 1051.5,295.2 1052.0,297.9 1052.5,300.6 1053.0,303.2 1053.5,305.9 1054.0,308.6 1054.5,311.3 1055.0,314.0 1055.5,316.6 1056.0,319.3 1056.5,322.0 1057.0,323.4 1057.5,323.4 1058.0,323.4 1058.5,323.4 1059.0,323.4 1059.5,323.4 1060.0,323.4 1060.5,323.4 1061.0,323.4 1061.5,323.4 1062.0,323.4 1062.5,323.4 1063.0,323.4 1063.5,323.4 1064.0,323.4 1064.5,323.4 1065.0,323.4 1065.5,323.4 1066.0,323.3 1066.5,322.5 1067.0,321.5 1067.5,320.4 1068.0,319.2 1068.5,317.8 1069.0,316.3 1069.5,314.7 1070.0,312.9 1070.5,311.1 1071.0,309.1 1071.5,307.1 1072.0,304.9 1072.5,302.7 1073.0,300.3 1073.5,297.9 1074.0,295.5 1074.5,293.0 1075.0,290.4 1075.5,287.8 1076.0,285.1 1076.5,282.5 1077.0,279.8 1077.5,277.1 1078.0,274.4 1078.5,271.8 1079.0,269.1 1079.5,266.5 1080.0,263.9 1080.5,261.4 1081.0,258.9 1081.5,256.4 1082.0,254.0 1082.5,251.6 1083.0,249.3 1083.5,247.1 1084.0,245.0 1084.5,242.9 1085.0,241.0 1085.5,239.1 1086.0,237.3 1086.5,235.6 1087.0,234.1 1087.5,232.6 1088.0,231.3 1088.5,230.1 1089.0,229.0 1089.5,228.0 1090.0,227.1 1090.5,226.4 1091.0,225.8 1091.5,225.4 1092.0,225.0 1092.5,224.9 1093.0,224.8 1093.5,224.9 1094.0,225.1 1094.5,225.4 1095.0,225.9 1095.5,226.5 1096.0,227.3 1096.5,228.2 1097.0,229.2 1097.5,230.3 1098.0,231.5 1098.5,232.9 1099.0,234.4 1099.5,235.9 1100.0,237.6 1100.5,239.4 1101.0,241.3 1101.5,243.3 1102.0,245.4 1102.5,247.5 1103.0,249.8 1103.5,252.1 1104.0,254.4 1104.5,256.9 1105.0,259.3 1105.5,261.9 1106.0,264.4 1106.5,267.0 1107.0,269.6 1107.5,272.3 1108.0,274.9 1108.5,277.6 1109.0,280.3 1109.5,283.0 1110.0,285.6 1110.5,288.3 1111.0,291.0 1111.5,293.7 1112.0,296.4 1112.5,299.0 1113.0,301.7 1113.5,304.4 1114.0,307.1 1114.5,309.8 1115.0,312.4 1115.5,315.1 1116.0,317.8 1116.5,320.5 1117.0,323.2 1117.5,323.4 1118.0,323.4 1118.5,323.4 1119.0,323.4 1119.5,323.4 1120.0,323.4 1120.5,323.4 1121.0,323.4 1121.5,323.4 1122.0,323.4 1122.5,323.4 1123.0,323.4 1123.5,323.4 1124.0,323.4 1124.5,323.4 1125.0,323.4 1125.5,323.4 1126.0,323.4 1126.5,323.0 1127.0,322.1 1127.5,321.1 1128.0,319.9 1128.5,318.6 1129.0,317.2 1129.5,315.6 1130.0,314.0 1130.5,312.2 1131.0,310.3 1131.5,308.2 1132.0,306.1 1132.5,303.9 1133.0,301.7 1133.5,299.3 1134.0,296.9 1134.5,294.4 1135.0,291.9 1135.5,289.3 1136.0,286.6 1136.5,284.0 1137.0,281.3 1137.5,278.6 1138.0,275.9 1138.5,273.3 1139.0,270.6 1139.5,268.0 1140.0,265.4 1140.5,262.8 1141.0,260.3 1141.5,257.8 1142.0,255.3 1142.5,253.0 1143.0,250.6 1143.5,248.4 1144.0,246.2 1144.5,244.1 1145.0,242.1 1145.5,240.1 1146.0,238.3 1146.5,236.6 1147.0,235.0 1147.5,233.4 1148.0,232.0 1148.5,230.7 1149.0,229.6 1149.5,228.5 1150.0,227.6 1150.5,226.8 1151.0,226.1 1151.5,225.6 1152.0,225.2 1152.5,224.9 1153.0,224.8 1153.5,224.8 1154.0,225.0 1154.5,225.2 1155.0,225.6 1155.5,226.2 1156.0,226.8 1156.5,227.6 1157.0,228.6 1157.5,229.6 1158.0,230.8 1158.5,232.1 1159.0,233.5 1159.5,235.0 1160.0,236.7 1160.5,238.4 1161.0,240.2 1161.5,242.2 1162.0,244.2 1162.5,246.3 1163.0,248.5 1163.5,250.8 1164.0,253.1 1164.5,255.5 1165.0,257.9 1165.5,260.4 1166.0,263.0 1166.5,265.5 1167.0,268.1 1167.5,270.8 1168.0,273.4 1168.5,276.1 1169.0,278.8 1169.5,281.4 1170.0,284.1 1170.5,286.8 1171.0,289.5 1171.5,292.2 1172.0,294.8 1172.5,297.5 1173.0,300.2 1173.5,302.9 1174.0,305.6 1174.5,308.2 1175.0,310.9 1175.5,313.6 1176.0,316.3 1176.5,319.0 1177.0,321.6 1177.5,323.4 1178.0,323.4 1178.5,323.4 1179.0,323.4 1179.5,323.4 1180.0,323.4 1180.5,323.4 1181.0,323.4 1181.5,323.4 1182.0,323.4 1182.5,323.4 1183.0,323.4 1183.5,323.4 1184.0,323.4 1184.5,323.4 1185.0,323.4 1185.5,323.4 1186.0,323.4 1186.5,323.4 1187.0,322.6 1187.5,321.7 1188.0,320.6 1188.5,319.4 1189.0,318.0 1189.5,316.5 1190.0,314.9 1190.5,313.2 1191.0,311.3 1191.5,309.4 1192.0,307.3 1192.5,305.2 1193.0,303.0 1193.5,300.7 1194.0,298.3 1194.5,295.8 1195.0,293.3 1195.5,290.7 1196.0,288.1 1196.5,285.5 1197.0,282.8 1197.5,280.1 1198.0,277.5 1198.5,274.8 1199.0,272.1 1199.5,269.5 1200.0,266.9 1200.5,264.3 1201.0,261.7 1201.5,259.2 1202.0,256.7 1202.5,254.3 1203.0,251.9 1203.5,249.6 1204.0,247.4 1204.5,245.3 1205.0,243.2 1205.5,241.2 1206.0,239.3 1206.5,237.5 1207.0,235.9 1207.5,234.3 1208.0,232.8 1208.5,231.5 1209.0,230.2 1209.5,229.1 1210.0,228.1 1210.5,227.2 1211.0,226.5 1211.5,225.9 1212.0,225.4 1212.5,225.1 1213.0,224.9 1213.5,224.8 1214.0,224.9 1214.5,225.1 1215.0,225.4 1215.5,225.9 1216.0,226.5 1216.5,227.2 1217.0,228.0 1217.5,229.0 1218.0,230.1 1218.5,231.4 1219.0,232.7 1219.5,234.2 1220.0,235.7 1220.5,237.4 1221.0,239.2 1221.5,241.1 1222.0,243.0 1222.5,245.1 1223.0,247.2 1223.5,249.5 1224.0,251.8 1224.5,254.1 1225.0,256.5 1225.5,259.0 1226.0,261.5 1226.5,264.1 1227.0,266.7 1227.5,269.3 1228.0,271.9 1228.5,274.6 1229.0,277.2 1229.5,279.9 1230.0,282.6 1230.5,285.3 1231.0,288.0 1231.5,290.6 1232.0,293.3 1232.5,296.0 1233.0,298.7 1233.5,301.4 1234.0,304.0 1234.5,306.7 1235.0,309.4 1235.5,312.1 1236.0,314.8 1236.5,317.4 1237.0,320.1 1237.5,322.8 1238.0,323.4 1238.5,323.4 1239.0,323.4 1239.5,323.4 1240.0,323.4 1240.5,323.4 1241.0,323.4 1241.5,323.4 1242.0,323.4 1242.5,323.4 1243.0,323.4 1243.5,323.4 1244.0,323.4 1244.5,323.4 1245.0,323.4 1245.5,323.4 1246.0,323.4 1246.5,323.4 1247.0,323.1 1247.5,322.2 1248.0,321.2 1248.5,320.1 1249.0,318.8 1249.5,317.4 1250.0,315.8 1250.5,314.2 1251.0,312.4 1251.5,310.5 1252.0,308.5 1252.5,306.4 1253.0,304.2 1253.5,302.0 1254.0,299.6 1254.5,297.2 1255.0,294.7 1255.5,292.2 1256.0,289.6 1256.5,287.0 1257.0,284.3 1257.5,281.7 1258.0,279.0 1258.5,276.3 1259.0,273.6 1259.5,271.0 1260.0,268.4 1260.5,265.7 1261.0,263.2 1261.5,260.6 1262.0,258.1 1262.5,255.7 1263.0,253.3 1263.5,250.9 1264.0,248.7 1264.5,246.5 1265.0,244.4 1265.5,242.3 1266.0,240.4 1266.5,238.5 1267.0,236.8 1267.5,235.2 1268.0,233.6 1268.5,232.2 1269.0,230.9 1269.5,229.7 1270.0,228.7 1270.5,227.7 1271.0,226.9 1271.5,226.2 1272.0,225.7 1272.5,225.3 1273.0,225.0 1273.5,224.8 1274.0,224.8 1274.5,224.9 1275.0,225.2 1275.5,225.6 1276.0,226.1 1276.5,226.8 1277.0,227.5 1277.5,228.4 1278.0,229.5 1278.5,230.6 1279.0,231.9 1279.5,233.3 1280.0,234.8 1280.5,236.4 1281.0,238.2 1281.5,240.0 1282.0,241.9 1282.5,243.9 1283.0,246.0 1283.5,248.2 1284.0,250.5 1284.5,252.8 1285.0,255.2 1285.5,257.6 1286.0,260.1 1286.5,262.6 1287.0,265.2 1287.5,267.8 1288.0,270.4 1288.5,273.1 1289.0,275.7 1289.5,278.4 1290.0,281.1 1290.5,283.8 1291.0,286.4 1291.5,289.1 1292.0,291.8 1292.5,294.5 1293.0,297.2 1293.5,299.8 1294.0,302.5 1294.5,305.2 1295.0,307.9 1295.5,310.6 1296.0,313.2 1296.5,315.9 1297.0,318.6 1297.5,321.3 1298.0,323.4 1298.5,323.4 1299.0,323.4 1299.5,323.4 1300.0,323.4 1300.5,323.4 1301.0,323.4 1301.5,323.4 1302.0,323.4 1302.5,323.4 1303.0,323.4 1303.5,323.4 1304.0,323.4 1304.5,323.4 1305.0,323.4 1305.5,323.4 1306.0,323.4 1306.5,323.4 1307.0,323.4 1307.5,322.7 1308.0,321.8 1308.5,320.7 1309.0,319.5 1309.5,318.2 1310.0,316.7 1310.5,315.1 1311.0,313.4 1311.5,311.6 1312.0,309.7 1312.5,307.6 1313.0,305.5 1313.5,303.3 1314.0,301.0 1314.5,298.6 1315.0,296.1 1315.5,293.6 1316.0,291.1 1316.5,288.5 1317.0,285.8 1317.5,283.2 1318.0,280.5 1318.5,277.8 1319.0,275.1 1319.5,272.5 1320.0,269.8 1320.5,267.2 1321.0,264.6 1321.5,262.1 1322.0,259.5 1322.5,257.0 1323.0,254.6 1323.5,252.2 1324.0,249.9 1324.5,247.7 1325.0,245.5 1325.5,243.5 1326.0,241.5 1326.5,239.6 1327.0,237.8 1327.5,236.1 1328.0,234.5 1328.5,233.0 1329.0,231.6 1329.5,230.4 1330.0,229.2 1330.5,228.2 1331.0,227.3 1331.5,226.6 1332.0,226.0 1332.5,225.5 1333.0,225.1 1333.5,224.9 1334.0,224.8 1334.5,224.8 1335.0,225.0 1335.5,225.3 1336.0,225.8 1336.5,226.4 1337.0,227.1 1337.5,227.9 1338.0,228.9 1338.5,230.0 1339.0,231.2 1339.5,232.5 1340.0,234.0 1340.5,235.5 1341.0,237.2 1341.5,239.0 1342.0,240.8 1342.5,242.8 1343.0,244.8 1343.5,247.0 1344.0,249.2 1344.5,251.5 1345.0,253.8 1345.5,256.2 1346.0,258.7 1346.5,261.2 1347.0,263.7 1347.5,266.3 1348.0,268.9 1348.5,271.6 1349.0,274.2 1349.5,276.9 1350.0,279.6 1350.5,282.2 1351.0,284.9 1351.5,287.6 1352.0,290.3 1352.5,293.0 1353.0,295.6 1353.5,298.3 1354.0,301.0 1354.5,303.7 1355.0,306.4 1355.5,309.1 1356.0,311.7 1356.5,314.4 1357.0,317.1 1357.5,319.8 1358.0,322.5 1358.5,323.4 1359.0,323.4 1359.5,323.4 1360.0,323.4 1360.5,323.4 1361.0,323.4 1361.5,323.4 1362.0,323.4 1362.5,323.4 1363.0,323.4 1363.5,323.4 1364.0,323.4 1364.5,323.4 1365.0,323.4 1365.5,323.4 1366.0,323.4 1366.5,323.4 1367.0,323.4 1367.5,323.2 1368.0,322.4 1368.5,321.4 1369.0,320.2 1369.5,319.0 1370.0,317.6 1370.5,316.1 1371.0,314.4 1371.5,312.6 1372.0,310.8 1372.5,308.8 1373.0,306.7 1373.5,304.5 1374.0,302.3 1374.5,299.9 1375.0,297.5 1375.5,295.1 1376.0,292.5 1376.5,290.0 1377.0,287.3 1377.5,284.7 1378.0,282.0 1378.5,279.3 1379.0,276.6 1379.5,274.0 1380.0,271.3 1380.5,268.7 1381.0,266.1 1381.5,263.5 1382.0,261.0 1382.5,258.4 1383.0,256.0 1383.5,253.6 1384.0,251.2 1384.5,249.0 1385.0,246.8 1385.5,244.6 1386.0,242.6 1386.5,240.6 1387.0,238.8 1387.5,237.0 1388.0,235.4 1388.5,233.8 1389.0,232.4 1389.5,231.1 1390.0,229.9 1390.5,228.8 1391.0,227.8 1391.5,227.0 1392.0,226.3 1392.5,225.7 1393.0,225.3 1393.5,225.0 1394.0,224.8 1394.5,224.8 1395.0,224.9 1395.5,225.1 1396.0,225.5 1396.5,226.0 1397.0,226.7 1397.5,227.4 1398.0,228.3 1398.5,229.3 1399.0,230.5 1399.5,231.7 1400.0,233.1 1400.5,234.6 1401.0,236.2 1401.5,237.9 1402.0,239.7 1402.5,241.7 1403.0,243.7 1403.5,245.7 1404.0,247.9 1404.5,250.2 1405.0,252.5 1405.5,254.8 1406.0,257.3 1406.5,259.8 1407.0,262.3 1407.5,264.9 1408.0,267.5 1408.5,270.1 1409.0,272.7 1409.5,275.4 1410.0,278.1 1410.5,280.7 1411.0,283.4 1411.5,286.1 1412.0,288.8 1412.5,291.5 1413.0,294.1 1413.5,296.8 1414.0,299.5 1414.5,302.2 1415.0,304.9 1415.5,307.5 1416.0,310.2 1416.5,312.9 1417.0,315.6 1417.5,318.3 1418.0,320.9 1418.5,323.4 1419.0,323.4 1419.5,323.4 1420.0,323.4 1420.5,323.4 1421.0,323.4 1421.5,323.4 1422.0,323.4 1422.5,323.4 1423.0,323.4 1423.5,323.4 1424.0,323.4 1424.5,323.4 1425.0,323.4 1425.5,323.4 1426.0,323.4 1426.5,323.4 1427.0,323.4 1427.5,323.4 1428.0,322.9 1428.5,321.9 1429.0,320.9 1429.5,319.7 1430.0,318.4 1430.5,316.9 1431.0,315.4 1431.5,313.7 1432.0,311.8 1432.5,309.9 1433.0,307.9 1433.5,305.8 1434.0,303.6 1434.5,301.3 1435.0,298.9 1435.5,296.5 1436.0,294.0 1436.5,291.4 1437.0,288.8 1437.5,286.2 1438.0,283.5 1438.5,280.9 1439.0,278.2 1439.5,275.5 1440.0,272.8 1440.5,270.2 1441.0,267.6 1441.5,265.0 1442.0,262.4 1442.5,259.9 1443.0,257.4 1443.5,254.9 1444.0,252.6 1444.5,250.2 1445.0,248.0 1445.5,245.8 1446.0,243.7 1446.5,241.7 1447.0,239.8 1447.5,238.0 1448.0,236.3 1448.5,234.7 1449.0,233.2 1449.5,231.8 1450.0,230.5 1450.5,229.4 1451.0,228.4 1451.5,227.5 1452.0,226.7 1452.5,226.0 1453.0,225.5 1453.5,225.2 1454.0,224.9 1454.5,224.8 1455.0,224.8 1455.5,225.0 1456.0,225.3 1456.5,225.7 1457.0,226.3 1457.5,227.0 1458.0,227.8 1458.5,228.7 1459.0,229.8 1459.5,231.0 1460.0,232.3 1460.5,233.8 1461.0,235.3 1461.5,237.0 1462.0,238.7 1462.5,240.6 1463.0,242.5 1463.5,244.6 1464.0,246.7 1464.5,248.9 1465.0,251.1 1465.5,253.5 1466.0,255.9 1466.5,258.3 1467.0,260.9 1467.5,263.4 1468.0,266.0 1468.5,268.6 1469.0,271.2 1469.5,273.9 1470.0,276.5 1470.5,279.2 1471.0,281.9 1471.5,284.6 1472.0,287.3 1472.5,289.9 1473.0,292.6 1473.5,295.3 1474.0,298.0 1474.5,300.7 1475.0,303.3 1475.5,306.0 1476.0,308.7 1476.5,311.4 1477.0,314.1 1477.5,316.7 1478.0,319.4 1478.5,322.1 1479.0,323.4 1479.5,323.4 1480.0,323.4 1480.5,323.4 1481.0,323.4 1481.5,323.4 1482.0,323.4 1482.5,323.4 1483.0,323.4 1483.5,323.4 1484.0,323.4 1484.5,323.4 1485.0,323.4 1485.5,323.4 1486.0,323.4 1486.5,323.4 1487.0,323.4 1487.5,323.4 1488.0,323.3 1488.5,322.5 1489.0,321.5 1489.5,320.4 1490.0,319.1 1490.5,317.8 1491.0,316.3 1491.5,314.6 1492.0,312.9 1492.5,311.0 1493.0,309.1 1493.5,307.0 1494.0,304.8 1494.5,302.6 1495.0,300.2 1495.5,297.9 1496.0,295.4 1496.5,292.9 1497.0,290.3 1497.5,287.7 1498.0,285.0 1498.5,282.4 1499.0,279.7 1499.5,277.0 1500.0,274.3 1500.5,271.7 1501.0,269.0 1501.5,266.4 1502.0,263.8 1502.5,261.3 1503.0,258.8 1503.5,256.3 1504.0,253.9 1504.5,251.5 1505.0,249.3 1505.5,247.0 1506.0,244.9 1506.5,242.9 1507.0,240.9 1507.5,239.0 1508.0,237.3 1508.5,235.6 1509.0,234.0 1509.5,232.6 1510.0,231.2 1510.5,230.0 1511.0,228.9 1511.5,228.0 1512.0,227.1 1512.5,226.4 1513.0,225.8 1513.5,225.4 1514.0,225.0 1514.5,224.9 1515.0,224.8 1515.5,224.9 1516.0,225.1 1516.5,225.5 1517.0,225.9 1517.5,226.6 1518.0,227.3 1518.5,228.2 1519.0,229.2 1519.5,230.3 1520.0,231.6 1520.5,232.9 1521.0,234.4 1521.5,236.0 1522.0,237.7 1522.5,239.5 1523.0,241.4 1523.5,243.4 1524.0,245.5 1524.5,247.6 1525.0,249.9 1525.5,252.2 1526.0,254.5 1526.5,256.9 1527.0,259.4 1527.5,262.0 1528.0,264.5 1528.5,267.1 1529.0,269.7 1529.5,272.4 1530.0,275.0 1530.5,277.7 1531.0,280.4 1531.5,283.1 1532.0,285.7 1532.5,288.4 1533.0,291.1 1533.5,293.8 1534.0,296.5 1534.5,299.1 1535.0,301.8 1535.5,304.5 1536.0,307.2 1536.5,309.9 1537.0,312.5 1537.5,315.2 1538.0,317.9 1538.5,320.6 1539.0,323.3 1539.5,323.4 1540.0,323.4 1540.5,323.4 1541.0,323.4 1541.5,323.4 1542.0,323.4 1542.5,323.4 1543.0,323.4 1543.5,323.4 1544.0,323.4 1544.5,323.4 1545.0,323.4 1545.5,323.4 1546.0,323.4 1546.5,323.4 1547.0,323.4 1547.5,323.4 1548.0,323.4 1548.5,323.0 1549.0,322.1 1549.5,321.0 1550.0,319.9 1550.5,318.6 1551.0,317.1 1551.5,315.6 1552.0,313.9 1552.5,312.1 1553.0,310.2 1553.5,308.2 1554.0,306.1 1554.5,303.9 1555.0,301.6 1555.5,299.2 1556.0,296.8 1556.5,294.3 1557.0,291.8 1557.5,289.2 1558.0,286.5 1558.5,283.9 1559.0,281.2 1559.5,278.5 1560.0,275.8 1560.5,273.2 1561.0,270.5 1561.5,267.9 1562.0,265.3 1562.5,262.7 1563.0,260.2 1563.5,257.7 1564.0,255.3 1564.5,252.9 1565.0,250.5 1565.5,248.3 1566.0,246.1 1566.5,244.0 1567.0,242.0 1567.5,240.1 1568.0,238.2 1568.5,236.5 1569.0,234.9 1569.5,233.4 1570.0,232.0 1570.5,230.7 1571.0,229.5 1571.5,228.5 1572.0,227.6 1572.5,226.8 1573.0,226.1 1573.5,225.6 1574.0,225.2 1574.5,224.9 1575.0,224.8 1575.5,224.8 1576.0,225.0 1576.5,225.2 1577.0,225.7 1577.5,226.2 1578.0,226.9 1578.5,227.7 1579.0,228.6 1579.5,229.7 1580.0,230.9 1580.5,232.2 1581.0,233.6 1581.5,235.1 1582.0,236.7 1582.5,238.5 1583.0,240.3 1583.5,242.3 1584.0,244.3 1584.5,246.4 1585.0,248.6 1585.5,250.8 1586.0,253.2 1586.5,255.6 1587.0,258.0 1587.5,260.5 1588.0,263.1 1588.5,265.6 1589.0,268.2 1589.5,270.9 1590.0,273.5 1590.5,276.2 1591.0,278.9 1591.5,281.5 1592.0,284.2 1592.5,286.9 1593.0,289.6 1593.5,292.3 1594.0,294.9 1594.5,297.6 1595.0,300.3 1595.5,303.0 1596.0,305.7 1596.5,308.3 1597.0,311.0 1597.5,313.7 1598.0,316.4 1598.5,319.1 1599.0,321.7 1599.5,323.4 1600.0,323.4 1600.5,323.4 1601.0,323.4 1601.5,323.4 1602.0,323.4 1602.5,323.4 1603.0,323.4 1603.5,323.4 1604.0,323.4 1604.5,323.4 1605.0,323.4 1605.5,323.4 1606.0,323.4 1606.5,323.4 1607.0,323.4 1607.5,323.4 1608.0,323.4 1608.5,323.4 1609.0,322.6 1609.5,321.6 1610.0,320.6 1610.5,319.3 1611.0,318.0 1611.5,316.5 1612.0,314.9 1612.5,313.1 1613.0,311.3 1613.5,309.3 1614.0,307.3 1614.5,305.1 1615.0,302.9 1615.5,300.6 1616.0,298.2 1616.5,295.7 1617.0,293.2 1617.5,290.6 1618.0,288.0 1618.5,285.4 1619.0,282.7 1619.5,280.0 1620.0,277.3 1620.5,274.7 1621.0,272.0 1621.5,269.4 1622.0,266.8 1622.5,264.2 1623.0,261.6 1623.5,259.1 1624.0,256.6 1624.5,254.2 1625.0,251.9 1625.5,249.6 1626.0,247.3 1626.5,245.2 1627.0,243.1 1627.5,241.1 1628.0,239.3 1628.5,237.5 1629.0,235.8 1629.5,234.2 1630.0,232.8 1630.5,231.4 1631.0,230.2 1631.5,229.1 1632.0,228.1 1632.5,227.2 1633.0,226.5 1633.5,225.9 1634.0,225.4 1634.5,225.1 1635.0,224.9 1635.5,224.8 1636.0,224.9 1636.5,225.1 1637.0,225.4 1637.5,225.9 1638.0,226.5 1638.5,227.2 1639.0,228.1 1639.5,229.1 1640.0,230.2 1640.5,231.4 1641.0,232.8 1641.5,234.2 1642.0,235.8 1642.5,237.5 1643.0,239.3 1643.5,241.1 1644.0,243.1 1644.5,245.2 1645.0,247.3 1645.5,249.6 1646.0,251.8 1646.5,254.2 1647.0,256.6 1647.5,259.1 1648.0,261.6 1648.5,264.2 1649.0,266.8 1649.5,269.4 1650.0,272.0 1650.5,274.7 1651.0,277.3 1651.5,280.0 1652.0,282.7 1652.5,285.4 1653.0,288.1 1653.5,290.7 1654.0,293.4 1654.5,296.1 1655.0,298.8 1655.5,301.5 1656.0,304.1 1656.5,306.8 1657.0,309.5 1657.5,312.2 1658.0,314.9 1658.5,317.5 1659.0,320.2 1659.5,322.9 1660.0,323.4 1660.5,323.4 1661.0,323.4 1661.5,323.4 1662.0,323.4 1662.5,323.4 1663.0,323.4 1663.5,323.4 1664.0,323.4 1664.5,323.4 1665.0,323.4 1665.5,323.4 1666.0,323.4 1666.5,323.4 1667.0,323.4 1667.5,323.4 1668.0,323.4 1668.5,323.4 1669.0,323.1 1669.5,322.2 1670.0,321.2 1670.5,320.0 1671.0,318.7 1671.5,317.3 1672.0,315.8 1672.5,314.1 1673.0,312.3 1673.5,310.4 1674.0,308.4 1674.5,306.3 1675.0,304.2 1675.5,301.9 1676.0,299.5 1676.5,297.1 1677.0,294.6 1677.5,292.1 1678.0,289.5 1678.5,286.9 1679.0,284.2 1679.5,281.6 1680.0,278.9 1680.5,276.2 1681.0,273.5 1681.5,270.9 1682.0,268.3 1682.5,265.6 1683.0,263.1" fill="none" stroke="#4a48c2" stroke-width="1.05" stroke-linejoin="round"/><rect x="706" y="3" width="1" height="548" fill="#1c1c1c" shape-rendering="crispEdges"/></svg>
<span id="t38" style="font-family:'Liberation Sans', sans-serif;font-size:13px;font-weight:400;color:#3a3a3a;letter-spacing:0.330px;left:14.20px;top:719.00px;-webkit-text-stroke:0.1px #3a3a3a;">Projet à :</span>
<div style="left:17px;top:738px;width:52px;height:22px;background:#fff;border:1px solid #b4b4b4;box-sizing:border-box"></div>
<span id="t39" style="font-family:'DejaVu Sans', sans-serif;font-size:12.5px;font-weight:400;color:#000;letter-spacing:0.359px;left:19.20px;top:743.30px;-webkit-text-stroke:0.18px #000;">88200</span>
<div style="left:72px;top:738px;width:22px;height:22px;background:linear-gradient(#fdfdfd,#eaeaea);border:1px solid #c2c2c2;border-radius:5px;box-sizing:border-box;box-shadow:0 0.5px 0.5px rgba(0,0,0,.15)"></div>
<svg style="left:77px;top:742px" width="10" height="14" viewBox="0 0 10 14"><path d="M2.4 4.9 L5 0.7 L7.6 4.9 Z M2.4 7.6 L5 11.8 L7.6 7.6 Z" fill="#6a6a6a"/></svg>
<div style="left:100px;top:735px;width:1px;height:27px;background:#777"></div>
<span id="t40" style="font-family:'Liberation Sans', sans-serif;font-size:13px;font-weight:400;color:#3a3a3a;letter-spacing:0.517px;left:106.60px;top:719.00px;-webkit-text-stroke:0.1px #3a3a3a;">Incrément :</span>
<div style="left:107.5px;top:739.5px;width:109px;height:20.5px;background:linear-gradient(#fff,#f4f4f4);border:1px solid #cdcdcd;border-radius:4.5px;box-sizing:border-box;box-shadow:0 0.5px 0.5px rgba(0,0,0,.12)"></div>
<span id="t41" style="font-family:'Liberation Sans', sans-serif;font-size:13px;font-weight:400;color:#2b2b2b;letter-spacing:0.445px;left:116.00px;top:743.00px;-webkit-text-stroke:0.1px #2b2b2b;">Off</span>
<svg style="left:203px;top:743px" width="9" height="14" viewBox="0 0 9 14"><path d="M1 5 L4.5 1.5 L8 5 M1 9 L4.5 12.5 L8 9" fill="none" stroke="#8c8c8c" stroke-width="1.1"/></svg>
<span id="t42" style="font-family:'Liberation Sans', sans-serif;font-size:13px;font-weight:400;color:#3a3a3a;letter-spacing:0.469px;left:223.00px;top:719.00px;-webkit-text-stroke:0.1px #3a3a3a;">Début de la sélection</span>
<div style="left:382.65px;top:718.45px;width:15.5px;height:15.5px;background:linear-gradient(#fff,#f4f4f4);border:1px solid #c0c0c0;border-radius:50%;box-sizing:border-box"></div><div style="left:387.8px;top:723.6px;width:5.2px;height:5.2px;background:#777;border-radius:50%"></div>
<span id="t43" style="font-family:'Liberation Sans', sans-serif;font-size:13px;font-weight:400;color:#3a3a3a;letter-spacing:0.719px;left:400.80px;top:719.00px;-webkit-text-stroke:0.1px #3a3a3a;">Fin</span>
<div style="left:427.25px;top:718.45px;width:15.5px;height:15.5px;background:linear-gradient(#fff,#f4f4f4);border:1px solid #c0c0c0;border-radius:50%;box-sizing:border-box"></div>
<span id="t44" style="font-family:'Liberation Sans', sans-serif;font-size:13px;font-weight:400;color:#3a3a3a;letter-spacing:0.495px;left:445.50px;top:719.00px;-webkit-text-stroke:0.1px #3a3a3a;">Durée</span>
<div style="left:541px;top:735px;width:1px;height:27px;background:#777"></div>
<span id="t45" style="font-family:'Liberation Sans', sans-serif;font-size:13px;font-weight:400;color:#3a3a3a;letter-spacing:0.493px;left:548.00px;top:719.00px;-webkit-text-stroke:0.1px #3a3a3a;">Position audio :</span>
<div style="left:223px;top:738px;width:153px;height:22px;background:#cdcdcd;border:1px solid #9b9b9b;box-shadow:inset 0 0 0 1px #fff;box-sizing:border-box"></div><div style="left:365px;top:740px;width:9px;height:18px;background:#c9c9c9;border-left:1px solid #f4f4f4;border-top:1px solid #f4f4f4;border-right:1px solid #777;border-bottom:1px solid #777;box-sizing:border-box"></div><svg style="left:366.2px;top:746px" width="7" height="5" viewBox="0 0 7 5"><path d="M0 0.3 L7 0.3 L3.5 4.6 Z" fill="#000"/></svg><span id="t46" style="font-family:'Liberation Serif', serif;font-size:16px;font-weight:400;color:#16169a;left:226.20px;top:740.40px;">0</span><span id="t47" style="font-family:'Liberation Serif', serif;font-size:16px;font-weight:400;color:#16169a;left:235.90px;top:740.40px;">0</span><span id="t48" style="font-family:'Liberation Serif', serif;font-size:14.5px;font-weight:400;color:#000;left:250.00px;top:741.40px;">h</span><span id="t49" style="font-family:'Liberation Serif', serif;font-size:16px;font-weight:400;color:#16169a;left:261.20px;top:740.40px;">0</span><span id="t50" style="font-family:'Liberation Serif', serif;font-size:16px;font-weight:400;color:#16169a;left:270.90px;top:740.40px;">0</span><span id="t51" style="font-family:'Liberation Serif', serif;font-size:14.5px;font-weight:400;color:#000;left:284.70px;top:741.40px;">m</span><span id="t52" style="font-family:'Liberation Serif', serif;font-size:16px;font-weight:400;color:#16169a;left:300.10px;top:740.40px;">0</span><span id="t53" style="font-family:'Liberation Serif', serif;font-size:16px;font-weight:400;color:#16169a;left:309.80px;top:740.40px;">0</span><span id="t54" style="font-family:'Liberation Serif', serif;font-size:16px;font-weight:400;color:#16169a;left:320.40px;top:740.40px;">.</span><span id="t55" style="font-family:'Liberation Serif', serif;font-size:16px;font-weight:400;color:#16169a;left:325.40px;top:740.40px;">3</span><span id="t56" style="font-family:'Liberation Serif', serif;font-size:16px;font-weight:400;color:#16169a;left:335.10px;top:740.40px;">9</span><span id="t57" style="font-family:'Liberation Serif', serif;font-size:16px;font-weight:400;color:#16169a;left:344.80px;top:740.40px;">7</span><span id="t58" style="font-family:'Liberation Serif', serif;font-size:14.5px;font-weight:400;color:#000;left:358.00px;top:741.40px;">s</span>
<div style="left:382px;top:738px;width:153px;height:22px;background:#cdcdcd;border:1px solid #9b9b9b;box-shadow:inset 0 0 0 1px #fff;box-sizing:border-box"></div><div style="left:524px;top:740px;width:9px;height:18px;background:#c9c9c9;border-left:1px solid #f4f4f4;border-top:1px solid #f4f4f4;border-right:1px solid #777;border-bottom:1px solid #777;box-sizing:border-box"></div><svg style="left:525.2px;top:746px" width="7" height="5" viewBox="0 0 7 5"><path d="M0 0.3 L7 0.3 L3.5 4.6 Z" fill="#000"/></svg><span id="t59" style="font-family:'Liberation Serif', serif;font-size:16px;font-weight:400;color:#16169a;left:385.20px;top:740.40px;">0</span><span id="t60" style="font-family:'Liberation Serif', serif;font-size:16px;font-weight:400;color:#16169a;left:394.90px;top:740.40px;">0</span><span id="t61" style="font-family:'Liberation Serif', serif;font-size:14.5px;font-weight:400;color:#000;left:409.00px;top:741.40px;">h</span><span id="t62" style="font-family:'Liberation Serif', serif;font-size:16px;font-weight:400;color:#16169a;left:420.20px;top:740.40px;">0</span><span id="t63" style="font-family:'Liberation Serif', serif;font-size:16px;font-weight:400;color:#16169a;left:429.90px;top:740.40px;">0</span><span id="t64" style="font-family:'Liberation Serif', serif;font-size:14.5px;font-weight:400;color:#000;left:443.70px;top:741.40px;">m</span><span id="t65" style="font-family:'Liberation Serif', serif;font-size:16px;font-weight:400;color:#16169a;left:459.10px;top:740.40px;">0</span><span id="t66" style="font-family:'Liberation Serif', serif;font-size:16px;font-weight:400;color:#16169a;left:468.80px;top:740.40px;">0</span><span id="t67" style="font-family:'Liberation Serif', serif;font-size:16px;font-weight:400;color:#16169a;left:479.40px;top:740.40px;">.</span><span id="t68" style="font-family:'Liberation Serif', serif;font-size:16px;font-weight:400;color:#16169a;left:484.40px;top:740.40px;">3</span><span id="t69" style="font-family:'Liberation Serif', serif;font-size:16px;font-weight:400;color:#16169a;left:494.10px;top:740.40px;">9</span><span id="t70" style="font-family:'Liberation Serif', serif;font-size:16px;font-weight:400;color:#16169a;left:503.80px;top:740.40px;">7</span><span id="t71" style="font-family:'Liberation Serif', serif;font-size:14.5px;font-weight:400;color:#000;left:517.00px;top:741.40px;">s</span>
<div style="left:548px;top:738px;width:153px;height:22px;background:#cdcdcd;border:1px solid #9b9b9b;box-shadow:inset 0 0 0 1px #fff;box-sizing:border-box"></div><div style="left:690px;top:740px;width:9px;height:18px;background:#c9c9c9;border-left:1px solid #f4f4f4;border-top:1px solid #f4f4f4;border-right:1px solid #777;border-bottom:1px solid #777;box-sizing:border-box"></div><svg style="left:691.2px;top:746px" width="7" height="5" viewBox="0 0 7 5"><path d="M0 0.3 L7 0.3 L3.5 4.6 Z" fill="#000"/></svg><span id="t72" style="font-family:'Liberation Serif', serif;font-size:16px;font-weight:400;color:#16169a;left:551.20px;top:740.40px;">0</span><span id="t73" style="font-family:'Liberation Serif', serif;font-size:16px;font-weight:400;color:#16169a;left:560.90px;top:740.40px;">0</span><span id="t74" style="font-family:'Liberation Serif', serif;font-size:14.5px;font-weight:400;color:#000;left:575.00px;top:741.40px;">h</span><span id="t75" style="font-family:'Liberation Serif', serif;font-size:16px;font-weight:400;color:#16169a;left:586.20px;top:740.40px;">0</span><span id="t76" style="font-family:'Liberation Serif', serif;font-size:16px;font-weight:400;color:#16169a;left:595.90px;top:740.40px;">0</span><span id="t77" style="font-family:'Liberation Serif', serif;font-size:14.5px;font-weight:400;color:#000;left:609.70px;top:741.40px;">m</span><span id="t78" style="font-family:'Liberation Serif', serif;font-size:16px;font-weight:400;color:#16169a;left:625.10px;top:740.40px;">0</span><span id="t79" style="font-family:'Liberation Serif', serif;font-size:16px;font-weight:400;color:#16169a;left:634.80px;top:740.40px;">0</span><span id="t80" style="font-family:'Liberation Serif', serif;font-size:16px;font-weight:400;color:#16169a;left:645.40px;top:740.40px;">.</span><span id="t81" style="font-family:'Liberation Serif', serif;font-size:16px;font-weight:400;color:#16169a;left:650.40px;top:740.40px;">0</span><span id="t82" style="font-family:'Liberation Serif', serif;font-size:16px;font-weight:400;color:#16169a;left:660.10px;top:740.40px;">0</span><span id="t83" style="font-family:'Liberation Serif', serif;font-size:16px;font-weight:400;color:#16169a;left:669.80px;top:740.40px;">0</span><span id="t84" style="font-family:'Liberation Serif', serif;font-size:14.5px;font-weight:400;color:#000;left:683.00px;top:741.40px;">s</span>
<div style="left:888px;top:357px;width:803px;height:440px;background:#ececec;border-radius:5px 5px 0 0;box-shadow:0 10px 28px 3px rgba(0,0,0,.30),0 0 0 0.5px rgba(0,0,0,.15)"></div>
<div style="left:888px;top:357px;width:803px;height:21px;background:linear-gradient(#f8f8f8,#f4f4f4);border-radius:5px 5px 0 0;border-bottom:1px solid #d2d2d2"></div>
<div style="left:896px;top:362px;width:12px;height:12px;background:#dddddd;border:1px solid #d0d0d0;border-radius:50%;box-sizing:border-box"></div>
<div style="left:916px;top:362px;width:12px;height:12px;background:#dddddd;border:1px solid #d0d0d0;border-radius:50%;box-sizing:border-box"></div>
<div style="left:936px;top:362px;width:12px;height:12px;background:#dddddd;border:1px solid #d0d0d0;border-radius:50%;box-sizing:border-box"></div>
<span id="t85" style="font-family:'Liberation Sans', sans-serif;font-size:13px;font-weight:400;color:#c3c3c3;letter-spacing:0.486px;left:1222.50px;top:362.00px;">Analyse de fréquence</span>
<svg style="left:0;top:0" width="1702" height="786" viewBox="0 0 1702 786" shape-rendering="crispEdges"><rect x="940" y="384" width="746" height="330" fill="#000"/><rect x="941" y="385" width="744" height="328" fill="#fff"/><rect x="956" y="385" width="1" height="328" fill="#bebebe"/><rect x="973" y="385" width="1" height="328" fill="#bebebe"/><rect x="990" y="385" width="1" height="328" fill="#bebebe"/><rect x="1007" y="385" width="1" height="328" fill="#bebebe"/><rect x="1024" y="385" width="1" height="328" fill="#a2a2a2"/><rect x="1041" y="385" width="1" height="328" fill="#bebebe"/><rect x="1058" y="385" width="1" height="328" fill="#bebebe"/><rect x="1075" y="385" width="1" height="328" fill="#bebebe"/><rect x="1092" y="385" width="1" height="328" fill="#bebebe"/><rect x="1109" y="385" width="1" height="328" fill="#7c7c7c"/><rect x="1125" y="385" width="1" height="328" fill="#bebebe"/><rect x="1142" y="385" width="1" height="328" fill="#bebebe"/><rect x="1159" y="385" width="1" height="328" fill="#bebebe"/><rect x="1176" y="385" width="1" height="328" fill="#bebebe"/><rect x="1193" y="385" width="1" height="328" fill="#a2a2a2"/><rect x="1210" y="385" width="1" height="328" fill="#bebebe"/><rect x="1227" y="385" width="1" height="328" fill="#bebebe"/><rect x="1244" y="385" width="1" height="328" fill="#bebebe"/><rect x="1261" y="385" width="1" height="328" fill="#bebebe"/><rect x="1278" y="385" width="1" height="328" fill="#7c7c7c"/><rect x="1294" y="385" width="1" height="328" fill="#bebebe"/><rect x="1311" y="385" width="1" height="328" fill="#bebebe"/><rect x="1328" y="385" width="1" height="328" fill="#bebebe"/><rect x="1345" y="385" width="1" height="328" fill="#bebebe"/><rect x="1362" y="385" width="1" height="328" fill="#a2a2a2"/><rect x="1379" y="385" width="1" height="328" fill="#bebebe"/><rect x="1396" y="385" width="1" height="328" fill="#bebebe"/><rect x="1413" y="385" width="1" height="328" fill="#bebebe"/><rect x="1430" y="385" width="1" height="328" fill="#bebebe"/><rect x="1447" y="385" width="1" height="328" fill="#7c7c7c"/><rect x="1464" y="385" width="1" height="328" fill="#bebebe"/><rect x="1480" y="385" width="1" height="328" fill="#bebebe"/><rect x="1497" y="385" width="1" height="328" fill="#bebebe"/><rect x="1514" y="385" width="1" height="328" fill="#bebebe"/><rect x="1531" y="385" width="1" height="328" fill="#a2a2a2"/><rect x="1548" y="385" width="1" height="328" fill="#bebebe"/><rect x="1565" y="385" width="1" height="328" fill="#bebebe"/><rect x="1582" y="385" width="1" height="328" fill="#bebebe"/><rect x="1599" y="385" width="1" height="328" fill="#bebebe"/><rect x="1616" y="385" width="1" height="328" fill="#7c7c7c"/><rect x="1633" y="385" width="1" height="328" fill="#bebebe"/><rect x="1650" y="385" width="1" height="328" fill="#bebebe"/><rect x="1666" y="385" width="1" height="328" fill="#bebebe"/><rect x="1683" y="385" width="1" height="328" fill="#bebebe"/><rect x="941" y="399" width="744" height="1" fill="#bcbcbc"/><rect x="941" y="425" width="744" height="1" fill="#8a8a8a"/><rect x="941" y="451" width="744" height="1" fill="#bcbcbc"/><rect x="941" y="478" width="744" height="1" fill="#bcbcbc"/><rect x="941" y="504" width="744" height="1" fill="#bcbcbc"/><rect x="941" y="530" width="744" height="1" fill="#8a8a8a"/><rect x="941" y="556" width="744" height="1" fill="#bcbcbc"/><rect x="941" y="582" width="744" height="1" fill="#bcbcbc"/><rect x="941" y="608" width="744" height="1" fill="#bcbcbc"/><rect x="941" y="634" width="744" height="1" fill="#8a8a8a"/><rect x="941" y="660" width="744" height="1" fill="#bcbcbc"/><rect x="941" y="686" width="744" height="1" fill="#bcbcbc"/><path d="M941,713V652 H942V661 H943V670 H944V680 H945V667 H946V654 H947V644 H948V633 H949V620 H950V604 H951V587 H952V570 H953V544 H954V499 H955V437 H956V385 H957V385 H958V396 H959V449 H960V502 H961V543 H962V556 H963V570 H964V594 H965V614 H966V627 H967V643 H968V657 H969V668 H970V670 H971V654 H972V611 H973V558 H974V513 H975V503 H976V523 H977V565 H978V623 H979V664 H980V690 H981V707 H982V713 H983V713 H984V713 H985V713 H986V713 H987V713 H988V713 H989V713 H990V682 H991V583 H992V525 H993V522 H994V537 H995V615 H996V706 H997V713 H998V713 H999V713 H1000V713 H1001V713 H1002V713 H1003V713 H1004V713 H1005V713 H1006V713 H1007V697 H1008V642 H1009V576 H1010V544 H1011V537 H1012V561 H1013V625 H1014V677 H1015V712 H1016V713 H1017V713 H1018V713 H1019V713 H1020V713 H1021V713 H1022V713 H1023V713 H1024V713 H1025V691 H1026V643 H1027V592 H1028V555 H1029V551 H1030V578 H1031V625 H1032V678 H1033V713 H1034V713 H1035V713 H1036V713 H1037V713 H1038V713 H1039V713 H1040V713 H1041V713 H1042V713 H1043V713 H1044V688 H1045V607 H1046V567 H1047V567 H1048V590 H1049V662 H1050V713 H1051V713 H1052V713 H1053V713 H1054V713 H1055V713 H1056V713 H1057V713 H1058V713 H1059V713 H1060V713 H1061V713 H1062V685 H1063V616 H1064V590 H1065V588 H1066V623 H1067V698 H1068V713 H1069V713 H1070V713 H1071V713 H1072V713 H1073V713 H1074V713 H1075V713 H1076V713 H1077V713 H1078V713 H1079V713 H1080V692 H1081V644 H1082V614 H1083V616 H1084V650 H1085V700 H1086V713 H1087V713 H1088V713 H1089V713 H1090V713 H1091V713 H1092V713 H1093V713 H1094V713 H1095V713 H1096V713 H1097V713 H1098V713 H1099V661 H1100V632 H1101V637 H1102V667 H1103V713 H1104V713 H1105V713 H1106V713 H1107V713 H1108V713 H1109V713 H1110V713 H1111V713 H1112V713 H1113V713 H1114V713 H1115V713 H1116V713 H1117V647 H1118V628 H1119V630 H1120V680 H1121V713 H1122V713 H1123V713 H1124V713 H1125V713 H1126V713 H1127V713 H1128V713 H1129V713 H1130V713 H1131V713 H1132V713 H1133V713 H1134V693 H1135V648 H1136V626 H1137V633 H1138V675 H1139V713 H1140V713 H1141V713 H1142V713 H1143V713 H1144V713 H1145V713 H1146V713 H1147V713 H1148V713 H1149V713 H1150V713 H1151V713 H1152V704 H1153V645 H1154V626 H1155V637 H1156V672 H1157V713 H1158V713 H1159V713 H1160V713 H1161V713 H1162V713 H1163V713 H1164V713 H1165V713 H1166V713 H1167V713 H1168V713 H1169V713 H1170V713 H1171V649 H1172V640 H1173V644 H1174V713 H1175V713 H1176V713 H1177V713 H1178V713 H1179V713 H1180V713 H1181V713 H1182V713 H1183V713 H1184V713 H1185V713 H1186V713 H1187V713 H1188V711 H1189V671 H1190V655 H1191V668 H1192V713 H1193V713 H1194V713 H1195V713 H1196V713 H1197V713 H1198V713 H1199V713 H1200V713 H1201V713 H1202V713 H1203V713 H1204V713 H1205V713 H1206V713 H1207V684 H1208V672 H1209V689 H1210V713 H1211V713 H1212V713 H1213V713 H1214V713 H1215V713 H1216V713 H1217V713 H1218V713 H1219V713 H1220V713 H1221V713 H1222V713 H1223V713 H1224V713 H1225V675 H1226V671 H1227V682 H1228V713 H1229V713 H1230V713 H1231V713 H1232V713 H1233V713 H1234V713 H1235V713 H1236V713 H1237V713 H1238V713 H1239V713 H1240V713 H1241V713 H1242V713 H1243V682 H1244V672 H1245V693 H1246V713 H1247V713 H1248V713 H1249V713 H1250V713 H1251V713 H1252V713 H1253V713 H1254V713 H1255V713 H1256V713 H1257V713 H1258V713 H1259V713 H1260V708 H1261V667 H1262V661 H1263V685 H1264V713 H1265V713 H1266V713 H1267V713 H1268V713 H1269V713 H1270V713 H1271V713 H1272V713 H1273V713 H1274V713 H1275V713 H1276V713 H1277V713 H1278V713 H1279V672 H1280V671 H1281V691 H1282V713 H1283V713 H1284V713 H1285V713 H1286V713 H1287V713 H1288V713 H1289V713 H1290V713 H1291V713 H1292V713 H1293V713 H1294V713 H1295V713 H1296V713 H1297V703 H1298V699 H1299V713 H1300V713 H1301V713 H1302V713 H1303V713 H1304V713 H1305V713 H1306V713 H1307V713 H1308V713 H1309V713 H1310V713 H1311V713 H1312V713 H1313V713 H1314V713 H1315V713 H1316V713 H1317V713 H1318V713 H1319V713 H1320V713 H1321V713 H1322V713 H1323V713 H1324V713 H1325V713 H1326V713 H1327V713 H1328V713 H1329V713 H1330V713 H1331V713 H1332V713 H1333V713 H1334V713 H1335V713 H1336V713 H1337V713 H1338V713 H1339V713 H1340V713 H1341V713 H1342V713 H1343V713 H1344V713 H1345V713 H1346V713 H1347V713 H1348V713 H1349V713 H1350V713 H1351V713 H1352V713 H1353V713 H1354V713 H1355V713 H1356V713 H1357V713 H1358V713 H1359V713 H1360V713 H1361V713 H1362V713 H1363V713 H1364V713 H1365V713 H1366V713 H1367V713 H1368V713 H1369V713 H1370V713 H1371V713 H1372V713 H1373V713 H1374V713 H1375V713 H1376V713 H1377V713 H1378V713 H1379V713 H1380V713 H1381V713 H1382V713 H1383V713 H1384V713 H1385V713 H1386V713 H1387V713 H1388V713 H1389V713 H1390V713 H1391V713 H1392V713 H1393V713 H1394V713 H1395V713 H1396V713 H1397V713 H1398V713 H1399V713 H1400V713 H1401V713 H1402V713 H1403V713 H1404V713 H1405V713 H1406V713 H1407V713 H1408V713 H1409V713 H1410V713 H1411V713 H1412V713 H1413V713 H1414V713 H1415V713 H1416V713 H1417V713 H1418V713 H1419V713 H1420V713 H1421V713 H1422V713 H1423V713 H1424V713 H1425V713 H1426V713 H1427V713 H1428V713 H1429V713 H1430V713 H1431V713 H1432V713 H1433V713 H1434V713 H1435V713 H1436V713 H1437V713 H1438V713 H1439V713 H1440V713 H1441V713 H1442V713 H1443V713 H1444V713 H1445V713 H1446V713 H1447V713 H1448V713 H1449V713 H1450V713 H1451V713 H1452V713 H1453V713 H1454V713 H1455V713 H1456V713 H1457V713 H1458V713 H1459V713 H1460V713 H1461V713 H1462V713 H1463V713 H1464V713 H1465V713 H1466V713 H1467V713 H1468V713 H1469V713 H1470V713 H1471V713 H1472V713 H1473V713 H1474V713 H1475V713 H1476V713 H1477V713 H1478V713 H1479V713 H1480V713 H1481V713 H1482V713 H1483V713 H1484V713 H1485V713 H1486V713 H1487V713 H1488V713 H1489V713 H1490V713 H1491V713 H1492V713 H1493V713 H1494V713 H1495V713 H1496V713 H1497V713 H1498V713 H1499V713 H1500V713 H1501V713 H1502V713 H1503V713 H1504V713 H1505V713 H1506V713 H1507V713 H1508V713 H1509V713 H1510V713 H1511V713 H1512V713 H1513V713 H1514V713 H1515V713 H1516V713 H1517V713 H1518V713 H1519V713 H1520V713 H1521V713 H1522V713 H1523V713 H1524V713 H1525V713 H1526V713 H1527V713 H1528V713 H1529V713 H1530V713 H1531V713 H1532V713 H1533V713 H1534V713 H1535V713 H1536V713 H1537V713 H1538V713 H1539V713 H1540V713 H1541V713 H1542V713 H1543V713 H1544V713 H1545V713 H1546V713 H1547V713 H1548V713 H1549V713 H1550V713 H1551V713 H1552V713 H1553V713 H1554V713 H1555V713 H1556V713 H1557V713 H1558V713 H1559V713 H1560V713 H1561V713 H1562V713 H1563V713 H1564V713 H1565V713 H1566V713 H1567V713 H1568V713 H1569V713 H1570V713 H1571V713 H1572V713 H1573V713 H1574V713 H1575V713 H1576V713 H1577V713 H1578V713 H1579V713 H1580V713 H1581V713 H1582V713 H1583V713 H1584V713 H1585V713 H1586V713 H1587V713 H1588V713 H1589V713 H1590V713 H1591V713 H1592V713 H1593V713 H1594V713 H1595V713 H1596V713 H1597V713 H1598V713 H1599V713 H1600V713 H1601V713 H1602V713 H1603V713 H1604V713 H1605V713 H1606V713 H1607V713 H1608V713 H1609V713 H1610V713 H1611V713 H1612V713 H1613V713 H1614V713 H1615V713 H1616V713 H1617V713 H1618V713 H1619V713 H1620V713 H1621V713 H1622V713 H1623V713 H1624V713 H1625V713 H1626V713 H1627V713 H1628V713 H1629V713 H1630V713 H1631V713 H1632V713 H1633V713 H1634V713 H1635V713 H1636V713 H1637V713 H1638V713 H1639V713 H1640V713 H1641V713 H1642V713 H1643V713 H1644V713 H1645V713 H1646V713 H1647V713 H1648V713 H1649V713 H1650V713 H1651V713 H1652V713 H1653V713 H1654V713 H1655V713 H1656V713 H1657V713 H1658V713 H1659V713 H1660V713 H1661V713 H1662V713 H1663V713 H1664V713 H1665V713 H1666V713 H1667V713 H1668V713 H1669V713 H1670V713 H1671V713 H1672V713 H1673V713 H1674V713 H1675V713 H1676V713 H1677V713 H1678V713 H1679V713 H1680V713 H1681V713 H1682V713 H1683V713 H1684V713 H1685V713 Z" fill="#9c50c8"/><clipPath id="spc"><path d="M941,713V652 H942V661 H943V670 H944V680 H945V667 H946V654 H947V644 H948V633 H949V620 H950V604 H951V587 H952V570 H953V544 H954V499 H955V437 H956V385 H957V385 H958V396 H959V449 H960V502 H961V543 H962V556 H963V570 H964V594 H965V614 H966V627 H967V643 H968V657 H969V668 H970V670 H971V654 H972V611 H973V558 H974V513 H975V503 H976V523 H977V565 H978V623 H979V664 H980V690 H981V707 H982V713 H983V713 H984V713 H985V713 H986V713 H987V713 H988V713 H989V713 H990V682 H991V583 H992V525 H993V522 H994V537 H995V615 H996V706 H997V713 H998V713 H999V713 H1000V713 H1001V713 H1002V713 H1003V713 H1004V713 H1005V713 H1006V713 H1007V697 H1008V642 H1009V576 H1010V544 H1011V537 H1012V561 H1013V625 H1014V677 H1015V712 H1016V713 H1017V713 H1018V713 H1019V713 H1020V713 H1021V713 H1022V713 H1023V713 H1024V713 H1025V691 H1026V643 H1027V592 H1028V555 H1029V551 H1030V578 H1031V625 H1032V678 H1033V713 H1034V713 H1035V713 H1036V713 H1037V713 H1038V713 H1039V713 H1040V713 H1041V713 H1042V713 H1043V713 H1044V688 H1045V607 H1046V567 H1047V567 H1048V590 H1049V662 H1050V713 H1051V713 H1052V713 H1053V713 H1054V713 H1055V713 H1056V713 H1057V713 H1058V713 H1059V713 H1060V713 H1061V713 H1062V685 H1063V616 H1064V590 H1065V588 H1066V623 H1067V698 H1068V713 H1069V713 H1070V713 H1071V713 H1072V713 H1073V713 H1074V713 H1075V713 H1076V713 H1077V713 H1078V713 H1079V713 H1080V692 H1081V644 H1082V614 H1083V616 H1084V650 H1085V700 H1086V713 H1087V713 H1088V713 H1089V713 H1090V713 H1091V713 H1092V713 H1093V713 H1094V713 H1095V713 H1096V713 H1097V713 H1098V713 H1099V661 H1100V632 H1101V637 H1102V667 H1103V713 H1104V713 H1105V713 H1106V713 H1107V713 H1108V713 H1109V713 H1110V713 H1111V713 H1112V713 H1113V713 H1114V713 H1115V713 H1116V713 H1117V647 H1118V628 H1119V630 H1120V680 H1121V713 H1122V713 H1123V713 H1124V713 H1125V713 H1126V713 H1127V713 H1128V713 H1129V713 H1130V713 H1131V713 H1132V713 H1133V713 H1134V693 H1135V648 H1136V626 H1137V633 H1138V675 H1139V713 H1140V713 H1141V713 H1142V713 H1143V713 H1144V713 H1145V713 H1146V713 H1147V713 H1148V713 H1149V713 H1150V713 H1151V713 H1152V704 H1153V645 H1154V626 H1155V637 H1156V672 H1157V713 H1158V713 H1159V713 H1160V713 H1161V713 H1162V713 H1163V713 H1164V713 H1165V713 H1166V713 H1167V713 H1168V713 H1169V713 H1170V713 H1171V649 H1172V640 H1173V644 H1174V713 H1175V713 H1176V713 H1177V713 H1178V713 H1179V713 H1180V713 H1181V713 H1182V713 H1183V713 H1184V713 H1185V713 H1186V713 H1187V713 H1188V711 H1189V671 H1190V655 H1191V668 H1192V713 H1193V713 H1194V713 H1195V713 H1196V713 H1197V713 H1198V713 H1199V713 H1200V713 H1201V713 H1202V713 H1203V713 H1204V713 H1205V713 H1206V713 H1207V684 H1208V672 H1209V689 H1210V713 H1211V713 H1212V713 H1213V713 H1214V713 H1215V713 H1216V713 H1217V713 H1218V713 H1219V713 H1220V713 H1221V713 H1222V713 H1223V713 H1224V713 H1225V675 H1226V671 H1227V682 H1228V713 H1229V713 H1230V713 H1231V713 H1232V713 H1233V713 H1234V713 H1235V713 H1236V713 H1237V713 H1238V713 H1239V713 H1240V713 H1241V713 H1242V713 H1243V682 H1244V672 H1245V693 H1246V713 H1247V713 H1248V713 H1249V713 H1250V713 H1251V713 H1252V713 H1253V713 H1254V713 H1255V713 H1256V713 H1257V713 H1258V713 H1259V713 H1260V708 H1261V667 H1262V661 H1263V685 H1264V713 H1265V713 H1266V713 H1267V713 H1268V713 H1269V713 H1270V713 H1271V713 H1272V713 H1273V713 H1274V713 H1275V713 H1276V713 H1277V713 H1278V713 H1279V672 H1280V671 H1281V691 H1282V713 H1283V713 H1284V713 H1285V713 H1286V713 H1287V713 H1288V713 H1289V713 H1290V713 H1291V713 H1292V713 H1293V713 H1294V713 H1295V713 H1296V713 H1297V703 H1298V699 H1299V713 H1300V713 H1301V713 H1302V713 H1303V713 H1304V713 H1305V713 H1306V713 H1307V713 H1308V713 H1309V713 H1310V713 H1311V713 H1312V713 H1313V713 H1314V713 H1315V713 H1316V713 H1317V713 H1318V713 H1319V713 H1320V713 H1321V713 H1322V713 H1323V713 H1324V713 H1325V713 H1326V713 H1327V713 H1328V713 H1329V713 H1330V713 H1331V713 H1332V713 H1333V713 H1334V713 H1335V713 H1336V713 H1337V713 H1338V713 H1339V713 H1340V713 H1341V713 H1342V713 H1343V713 H1344V713 H1345V713 H1346V713 H1347V713 H1348V713 H1349V713 H1350V713 H1351V713 H1352V713 H1353V713 H1354V713 H1355V713 H1356V713 H1357V713 H1358V713 H1359V713 H1360V713 H1361V713 H1362V713 H1363V713 H1364V713 H1365V713 H1366V713 H1367V713 H1368V713 H1369V713 H1370V713 H1371V713 H1372V713 H1373V713 H1374V713 H1375V713 H1376V713 H1377V713 H1378V713 H1379V713 H1380V713 H1381V713 H1382V713 H1383V713 H1384V713 H1385V713 H1386V713 H1387V713 H1388V713 H1389V713 H1390V713 H1391V713 H1392V713 H1393V713 H1394V713 H1395V713 H1396V713 H1397V713 H1398V713 H1399V713 H1400V713 H1401V713 H1402V713 H1403V713 H1404V713 H1405V713 H1406V713 H1407V713 H1408V713 H1409V713 H1410V713 H1411V713 H1412V713 H1413V713 H1414V713 H1415V713 H1416V713 H1417V713 H1418V713 H1419V713 H1420V713 H1421V713 H1422V713 H1423V713 H1424V713 H1425V713 H1426V713 H1427V713 H1428V713 H1429V713 H1430V713 H1431V713 H1432V713 H1433V713 H1434V713 H1435V713 H1436V713 H1437V713 H1438V713 H1439V713 H1440V713 H1441V713 H1442V713 H1443V713 H1444V713 H1445V713 H1446V713 H1447V713 H1448V713 H1449V713 H1450V713 H1451V713 H1452V713 H1453V713 H1454V713 H1455V713 H1456V713 H1457V713 H1458V713 H1459V713 H1460V713 H1461V713 H1462V713 H1463V713 H1464V713 H1465V713 H1466V713 H1467V713 H1468V713 H1469V713 H1470V713 H1471V713 H1472V713 H1473V713 H1474V713 H1475V713 H1476V713 H1477V713 H1478V713 H1479V713 H1480V713 H1481V713 H1482V713 H1483V713 H1484V713 H1485V713 H1486V713 H1487V713 H1488V713 H1489V713 H1490V713 H1491V713 H1492V713 H1493V713 H1494V713 H1495V713 H1496V713 H1497V713 H1498V713 H1499V713 H1500V713 H1501V713 H1502V713 H1503V713 H1504V713 H1505V713 H1506V713 H1507V713 H1508V713 H1509V713 H1510V713 H1511V713 H1512V713 H1513V713 H1514V713 H1515V713 H1516V713 H1517V713 H1518V713 H1519V713 H1520V713 H1521V713 H1522V713 H1523V713 H1524V713 H1525V713 H1526V713 H1527V713 H1528V713 H1529V713 H1530V713 H1531V713 H1532V713 H1533V713 H1534V713 H1535V713 H1536V713 H1537V713 H1538V713 H1539V713 H1540V713 H1541V713 H1542V713 H1543V713 H1544V713 H1545V713 H1546V713 H1547V713 H1548V713 H1549V713 H1550V713 H1551V713 H1552V713 H1553V713 H1554V713 H1555V713 H1556V713 H1557V713 H1558V713 H1559V713 H1560V713 H1561V713 H1562V713 H1563V713 H1564V713 H1565V713 H1566V713 H1567V713 H1568V713 H1569V713 H1570V713 H1571V713 H1572V713 H1573V713 H1574V713 H1575V713 H1576V713 H1577V713 H1578V713 H1579V713 H1580V713 H1581V713 H1582V713 H1583V713 H1584V713 H1585V713 H1586V713 H1587V713 H1588V713 H1589V713 H1590V713 H1591V713 H1592V713 H1593V713 H1594V713 H1595V713 H1596V713 H1597V713 H1598V713 H1599V713 H1600V713 H1601V713 H1602V713 H1603V713 H1604V713 H1605V713 H1606V713 H1607V713 H1608V713 H1609V713 H1610V713 H1611V713 H1612V713 H1613V713 H1614V713 H1615V713 H1616V713 H1617V713 H1618V713 H1619V713 H1620V713 H1621V713 H1622V713 H1623V713 H1624V713 H1625V713 H1626V713 H1627V713 H1628V713 H1629V713 H1630V713 H1631V713 H1632V713 H1633V713 H1634V713 H1635V713 H1636V713 H1637V713 H1638V713 H1639V713 H1640V713 H1641V713 H1642V713 H1643V713 H1644V713 H1645V713 H1646V713 H1647V713 H1648V713 H1649V713 H1650V713 H1651V713 H1652V713 H1653V713 H1654V713 H1655V713 H1656V713 H1657V713 H1658V713 H1659V713 H1660V713 H1661V713 H1662V713 H1663V713 H1664V713 H1665V713 H1666V713 H1667V713 H1668V713 H1669V713 H1670V713 H1671V713 H1672V713 H1673V713 H1674V713 H1675V713 H1676V713 H1677V713 H1678V713 H1679V713 H1680V713 H1681V713 H1682V713 H1683V713 H1684V713 H1685V713 Z"/></clipPath><g clip-path="url(#spc)"><rect x="956" y="385" width="1" height="328" fill="#dcc0ec"/><rect x="973" y="385" width="1" height="328" fill="#dcc0ec"/><rect x="990" y="385" width="1" height="328" fill="#dcc0ec"/><rect x="1007" y="385" width="1" height="328" fill="#dcc0ec"/><rect x="1024" y="385" width="1" height="328" fill="#dcc0ec"/><rect x="1041" y="385" width="1" height="328" fill="#dcc0ec"/><rect x="1058" y="385" width="1" height="328" fill="#dcc0ec"/><rect x="1075" y="385" width="1" height="328" fill="#dcc0ec"/><rect x="1092" y="385" width="1" height="328" fill="#dcc0ec"/><rect x="1109" y="385" width="1" height="328" fill="#dcc0ec"/><rect x="1125" y="385" width="1" height="328" fill="#dcc0ec"/><rect x="1142" y="385" width="1" height="328" fill="#dcc0ec"/><rect x="1159" y="385" width="1" height="328" fill="#dcc0ec"/><rect x="1176" y="385" width="1" height="328" fill="#dcc0ec"/><rect x="1193" y="385" width="1" height="328" fill="#dcc0ec"/><rect x="1210" y="385" width="1" height="328" fill="#dcc0ec"/><rect x="1227" y="385" width="1" height="328" fill="#dcc0ec"/><rect x="1244" y="385" width="1" height="328" fill="#dcc0ec"/><rect x="1261" y="385" width="1" height="328" fill="#dcc0ec"/><rect x="1278" y="385" width="1" height="328" fill="#dcc0ec"/><rect x="1294" y="385" width="1" height="328" fill="#dcc0ec"/><rect x="1311" y="385" width="1" height="328" fill="#dcc0ec"/><rect x="1328" y="385" width="1" height="328" fill="#dcc0ec"/><rect x="1345" y="385" width="1" height="328" fill="#dcc0ec"/><rect x="1362" y="385" width="1" height="328" fill="#dcc0ec"/><rect x="1379" y="385" width="1" height="328" fill="#dcc0ec"/><rect x="1396" y="385" width="1" height="328" fill="#dcc0ec"/><rect x="1413" y="385" width="1" height="328" fill="#dcc0ec"/><rect x="1430" y="385" width="1" height="328" fill="#dcc0ec"/><rect x="1447" y="385" width="1" height="328" fill="#dcc0ec"/><rect x="1464" y="385" width="1" height="328" fill="#dcc0ec"/><rect x="1480" y="385" width="1" height="328" fill="#dcc0ec"/><rect x="1497" y="385" width="1" height="328" fill="#dcc0ec"/><rect x="1514" y="385" width="1" height="328" fill="#dcc0ec"/><rect x="1531" y="385" width="1" height="328" fill="#dcc0ec"/><rect x="1548" y="385" width="1" height="328" fill="#dcc0ec"/><rect x="1565" y="385" width="1" height="328" fill="#dcc0ec"/><rect x="1582" y="385" width="1" height="328" fill="#dcc0ec"/><rect x="1599" y="385" width="1" height="328" fill="#dcc0ec"/><rect x="1616" y="385" width="1" height="328" fill="#dcc0ec"/><rect x="1633" y="385" width="1" height="328" fill="#dcc0ec"/><rect x="1650" y="385" width="1" height="328" fill="#dcc0ec"/><rect x="1666" y="385" width="1" height="328" fill="#dcc0ec"/><rect x="1683" y="385" width="1" height="328" fill="#dcc0ec"/><rect x="941" y="399" width="744" height="1" fill="#dcc0ec"/><rect x="941" y="425" width="744" height="1" fill="#dcc0ec"/><rect x="941" y="451" width="744" height="1" fill="#dcc0ec"/><rect x="941" y="478" width="744" height="1" fill="#dcc0ec"/><rect x="941" y="504" width="744" height="1" fill="#dcc0ec"/><rect x="941" y="530" width="744" height="1" fill="#dcc0ec"/><rect x="941" y="556" width="744" height="1" fill="#dcc0ec"/><rect x="941" y="582" width="744" height="1" fill="#dcc0ec"/><rect x="941" y="608" width="744" height="1" fill="#dcc0ec"/><rect x="941" y="634" width="744" height="1" fill="#dcc0ec"/><rect x="941" y="660" width="744" height="1" fill="#dcc0ec"/><rect x="941" y="686" width="744" height="1" fill="#dcc0ec"/></g><rect x="937" y="399" width="3" height="1" fill="#000"/><rect x="937" y="425" width="3" height="1" fill="#000"/><rect x="937" y="451" width="3" height="1" fill="#000"/><rect x="937" y="478" width="3" height="1" fill="#000"/><rect x="937" y="504" width="3" height="1" fill="#000"/><rect x="937" y="530" width="3" height="1" fill="#000"/><rect x="937" y="556" width="3" height="1" fill="#000"/><rect x="937" y="582" width="3" height="1" fill="#000"/><rect x="937" y="608" width="3" height="1" fill="#000"/><rect x="937" y="634" width="3" height="1" fill="#000"/><rect x="937" y="660" width="3" height="1" fill="#000"/><rect x="937" y="686" width="3" height="1" fill="#000"/><rect x="956" y="714" width="1" height="3" fill="#000"/><rect x="973" y="714" width="1" height="3" fill="#000"/><rect x="990" y="714" width="1" height="3" fill="#000"/><rect x="1007" y="714" width="1" height="3" fill="#000"/><rect x="1024" y="714" width="1" height="5" fill="#000"/><rect x="1041" y="714" width="1" height="3" fill="#000"/><rect x="1058" y="714" width="1" height="3" fill="#000"/><rect x="1075" y="714" width="1" height="3" fill="#000"/><rect x="1092" y="714" width="1" height="3" fill="#000"/><rect x="1109" y="714" width="1" height="5" fill="#000"/><rect x="1125" y="714" width="1" height="3" fill="#000"/><rect x="1142" y="714" width="1" height="3" fill="#000"/><rect x="1159" y="714" width="1" height="3" fill="#000"/><rect x="1176" y="714" width="1" height="3" fill="#000"/><rect x="1193" y="714" width="1" height="5" fill="#000"/><rect x="1210" y="714" width="1" height="3" fill="#000"/><rect x="1227" y="714" width="1" height="3" fill="#000"/><rect x="1244" y="714" width="1" height="3" fill="#000"/><rect x="1261" y="714" width="1" height="3" fill="#000"/><rect x="1278" y="714" width="1" height="5" fill="#000"/><rect x="1294" y="714" width="1" height="3" fill="#000"/><rect x="1311" y="714" width="1" height="3" fill="#000"/><rect x="1328" y="714" width="1" height="3" fill="#000"/><rect x="1345" y="714" width="1" height="3" fill="#000"/><rect x="1362" y="714" width="1" height="5" fill="#000"/><rect x="1379" y="714" width="1" height="3" fill="#000"/><rect x="1396" y="714" width="1" height="3" fill="#000"/><rect x="1413" y="714" width="1" height="3" fill="#000"/><rect x="1430" y="714" width="1" height="3" fill="#000"/><rect x="1447" y="714" width="1" height="5" fill="#000"/><rect x="1464" y="714" width="1" height="3" fill="#000"/><rect x="1480" y="714" width="1" height="3" fill="#000"/><rect x="1497" y="714" width="1" height="3" fill="#000"/><rect x="1514" y="714" width="1" height="3" fill="#000"/><rect x="1531" y="714" width="1" height="5" fill="#000"/><rect x="1548" y="714" width="1" height="3" fill="#000"/><rect x="1565" y="714" width="1" height="3" fill="#000"/><rect x="1582" y="714" width="1" height="3" fill="#000"/><rect x="1599" y="714" width="1" height="3" fill="#000"/><rect x="1616" y="714" width="1" height="5" fill="#000"/><rect x="1633" y="714" width="1" height="3" fill="#000"/><rect x="1650" y="714" width="1" height="3" fill="#000"/><rect x="1666" y="714" width="1" height="3" fill="#000"/><rect x="1683" y="714" width="1" height="3" fill="#000"/></svg>
<span id="t86" style="font-family:'DejaVu Sans', sans-serif;font-size:11px;font-weight:400;color:#000;transform-origin:0 50%;transform:scaleX(1.757);left:900.00px;top:394.70px;-webkit-text-stroke:0.18px #000;">-</span>
<span id="t87" style="font-family:'DejaVu Sans', sans-serif;font-size:11px;font-weight:400;color:#000;letter-spacing:0.756px;left:907.00px;top:394.70px;-webkit-text-stroke:0.18px #000;">18dB</span>
<span id="t88" style="font-family:'DejaVu Sans', sans-serif;font-size:11px;font-weight:700;color:#000;transform-origin:0 50%;transform:scaleX(1.573);left:898.20px;top:420.70px;">-</span>
<span id="t89" style="font-family:'DejaVu Sans', sans-serif;font-size:11px;font-weight:700;color:#000;letter-spacing:0.274px;left:905.00px;top:420.70px;">24dB</span>
<span id="t90" style="font-family:'DejaVu Sans', sans-serif;font-size:11px;font-weight:400;color:#000;transform-origin:0 50%;transform:scaleX(1.757);left:900.00px;top:446.70px;-webkit-text-stroke:0.18px #000;">-</span>
<span id="t91" style="font-family:'DejaVu Sans', sans-serif;font-size:11px;font-weight:400;color:#000;letter-spacing:0.756px;left:907.00px;top:446.70px;-webkit-text-stroke:0.18px #000;">30dB</span>
<span id="t92" style="font-family:'DejaVu Sans', sans-serif;font-size:11px;font-weight:400;color:#000;transform-origin:0 50%;transform:scaleX(1.757);left:900.00px;top:473.70px;-webkit-text-stroke:0.18px #000;">-</span>
<span id="t93" style="font-family:'DejaVu Sans', sans-serif;font-size:11px;font-weight:400;color:#000;letter-spacing:0.756px;left:907.00px;top:473.70px;-webkit-text-stroke:0.18px #000;">36dB</span>
<span id="t94" style="font-family:'DejaVu Sans', sans-serif;font-size:11px;font-weight:400;color:#000;transform-origin:0 50%;transform:scaleX(1.757);left:900.00px;top:499.70px;-webkit-text-stroke:0.18px #000;">-</span>
<span id="t95" style="font-family:'DejaVu Sans', sans-serif;font-size:11px;font-weight:400;color:#000;letter-spacing:0.756px;left:907.00px;top:499.70px;-webkit-text-stroke:0.18px #000;">42dB</span>
<span id="t96" style="font-family:'DejaVu Sans', sans-serif;font-size:11px;font-weight:700;color:#000;transform-origin:0 50%;transform:scaleX(1.573);left:898.20px;top:525.70px;">-</span>
<span id="t97" style="font-family:'DejaVu Sans', sans-serif;font-size:11px;font-weight:700;color:#000;letter-spacing:0.274px;left:905.00px;top:525.70px;">48dB</span>
<span id="t98" style="font-family:'DejaVu Sans', sans-serif;font-size:11px;font-weight:400;color:#000;transform-origin:0 50%;transform:scaleX(1.757);left:900.00px;top:551.70px;-webkit-text-stroke:0.18px #000;">-</span>
<span id="t99" style="font-family:'DejaVu Sans', sans-serif;font-size:11px;font-weight:400;color:#000;letter-spacing:0.756px;left:907.00px;top:551.70px;-webkit-text-stroke:0.18px #000;">54dB</span>
<span id="t100" style="font-family:'DejaVu Sans', sans-serif;font-size:11px;font-weight:400;color:#000;transform-origin:0 50%;transform:scaleX(1.757);left:900.00px;top:577.70px;-webkit-text-stroke:0.18px #000;">-</span>
<span id="t101" style="font-family:'DejaVu Sans', sans-serif;font-size:11px;font-weight:400;color:#000;letter-spacing:0.756px;left:907.00px;top:577.70px;-webkit-text-stroke:0.18px #000;">60dB</span>
<span id="t102" style="font-family:'DejaVu Sans', sans-serif;font-size:11px;font-weight:400;color:#000;transform-origin:0 50%;transform:scaleX(1.757);left:900.00px;top:603.70px;-webkit-text-stroke:0.18px #000;">-</span>
<span id="t103" style="font-family:'DejaVu Sans', sans-serif;font-size:11px;font-weight:400;color:#000;letter-spacing:0.756px;left:907.00px;top:603.70px;-webkit-text-stroke:0.18px #000;">66dB</span>
<span id="t104" style="font-family:'DejaVu Sans', sans-serif;font-size:11px;font-weight:700;color:#000;transform-origin:0 50%;transform:scaleX(1.573);left:898.20px;top:629.70px;">-</span>
<span id="t105" style="font-family:'DejaVu Sans', sans-serif;font-size:11px;font-weight:700;color:#000;letter-spacing:0.274px;left:905.00px;top:629.70px;">72dB</span>
<span id="t106" style="font-family:'DejaVu Sans', sans-serif;font-size:11px;font-weight:400;color:#000;transform-origin:0 50%;transform:scaleX(1.757);left:900.00px;top:655.70px;-webkit-text-stroke:0.18px #000;">-</span>
<span id="t107" style="font-family:'DejaVu Sans', sans-serif;font-size:11px;font-weight:400;color:#000;letter-spacing:0.756px;left:907.00px;top:655.70px;-webkit-text-stroke:0.18px #000;">78dB</span>
<span id="t108" style="font-family:'DejaVu Sans', sans-serif;font-size:11px;font-weight:400;color:#000;transform-origin:0 50%;transform:scaleX(1.757);left:900.00px;top:681.70px;-webkit-text-stroke:0.18px #000;">-</span>
<span id="t109" style="font-family:'DejaVu Sans', sans-serif;font-size:11px;font-weight:400;color:#000;letter-spacing:0.756px;left:907.00px;top:681.70px;-webkit-text-stroke:0.18px #000;">84dB</span>
<span id="t110" style="font-family:'DejaVu Sans', sans-serif;font-size:11px;font-weight:400;color:#000;transform-origin:0 50%;transform:scaleX(1.757);left:900.00px;top:699.70px;-webkit-text-stroke:0.18px #000;">-</span>
<span id="t111" style="font-family:'DejaVu Sans', sans-serif;font-size:11px;font-weight:400;color:#000;letter-spacing:0.756px;left:907.00px;top:699.70px;-webkit-text-stroke:0.18px #000;">90dB</span>
<span id="t112" style="font-family:'DejaVu Sans', sans-serif;font-size:11px;font-weight:400;color:#000;letter-spacing:0.691px;left:941.50px;top:721.00px;-webkit-text-stroke:0.18px #000;">1000Hz</span>
<span id="t113" style="font-family:'DejaVu Sans', sans-serif;font-size:11px;font-weight:700;color:#000;letter-spacing:0.053px;left:1001.25px;top:721.00px;">5000Hz</span>
<span id="t114" style="font-family:'DejaVu Sans', sans-serif;font-size:11px;font-weight:700;color:#000;letter-spacing:0.185px;left:1082.00px;top:721.00px;">10000Hz</span>
<span id="t115" style="font-family:'DejaVu Sans', sans-serif;font-size:11px;font-weight:700;color:#000;letter-spacing:0.185px;left:1166.00px;top:721.00px;">15000Hz</span>
<span id="t116" style="font-family:'DejaVu Sans', sans-serif;font-size:11px;font-weight:700;color:#000;letter-spacing:0.185px;left:1251.00px;top:721.00px;">20000Hz</span>
<span id="t117" style="font-family:'DejaVu Sans', sans-serif;font-size:11px;font-weight:700;color:#000;letter-spacing:0.185px;left:1335.00px;top:721.00px;">25000Hz</span>
<span id="t118" style="font-family:'DejaVu Sans', sans-serif;font-size:11px;font-weight:700;color:#000;letter-spacing:0.185px;left:1420.00px;top:721.00px;">30000Hz</span>
<span id="t119" style="font-family:'DejaVu Sans', sans-serif;font-size:11px;font-weight:700;color:#000;letter-spacing:0.185px;left:1504.00px;top:721.00px;">35000Hz</span>
<span id="t120" style="font-family:'DejaVu Sans', sans-serif;font-size:11px;font-weight:700;color:#000;letter-spacing:0.185px;left:1589.00px;top:721.00px;">40000Hz</span>
<span id="t121" style="font-family:'Liberation Sans', sans-serif;font-size:13px;font-weight:400;color:#2e2e2e;letter-spacing:0.387px;left:945.40px;top:745.70px;-webkit-text-stroke:0.1px #2e2e2e;">Curseur : 10143 Hz (D#9) = -112 dB</span>
<span id="t122" style="font-family:'Liberation Sans', sans-serif;font-size:13px;font-weight:400;color:#2e2e2e;letter-spacing:0.364px;left:1181.00px;top:745.70px;-webkit-text-stroke:0.1px #2e2e2e;">Crête : 9967 Hz (D#9) = -104.8 dB</span>
<span id="t123" style="font-family:'Liberation Sans', sans-serif;font-size:13px;font-weight:400;color:#2e2e2e;letter-spacing:0.148px;left:899.00px;top:778.00px;-webkit-text-stroke:0.1px #2e2e2e;">Algorithme :</span>
<div style="left:983.5px;top:775.5px;width:242px;height:22px;background:linear-gradient(#fff,#f6f6f6);border:1px solid #c6c6c6;border-radius:4.5px;box-sizing:border-box"></div>
<span id="t124" style="font-family:'Liberation Sans', sans-serif;font-size:13px;font-weight:400;color:#2e2e2e;letter-spacing:0.198px;left:992.00px;top:778.50px;-webkit-text-stroke:0.1px #2e2e2e;">Spectre</span>
<svg style="left:1212px;top:779px" width="9" height="14" viewBox="0 0 9 14"><path d="M1 5 L4.5 1.5 L8 5 M1 9 L4.5 12.5 L8 9" fill="none" stroke="#8c8c8c" stroke-width="1.1"/></svg>
<span id="t125" style="font-family:'Liberation Sans', sans-serif;font-size:13px;font-weight:400;color:#2e2e2e;letter-spacing:0.042px;left:1236.00px;top:778.00px;-webkit-text-stroke:0.1px #2e2e2e;">Taille:</span>
<div style="left:1282px;top:775.5px;width:205px;height:22px;background:linear-gradient(#fff,#f6f6f6);border:1px solid #c6c6c6;border-radius:4.5px;box-sizing:border-box"></div>
<span id="t126" style="font-family:'Liberation Sans', sans-serif;font-size:13px;font-weight:400;color:#2e2e2e;letter-spacing:0.026px;left:1290.00px;top:778.50px;-webkit-text-stroke:0.1px #2e2e2e;">1024</span>
<svg style="left:1473px;top:779px" width="9" height="14" viewBox="0 0 9 14"><path d="M1 5 L4.5 1.5 L8 5 M1 9 L4.5 12.5 L8 9" fill="none" stroke="#8c8c8c" stroke-width="1.1"/></svg>
<div style="left:1507.5px;top:775.5px;width:86px;height:22px;background:#f3f3f3;border:1px solid #d0d0d0;border-radius:4.5px;box-sizing:border-box"></div>
<span id="t127" style="font-family:'Liberation Sans', sans-serif;font-size:13px;font-weight:400;color:#b4b4b4;letter-spacing:0.475px;left:1518.50px;top:778.50px;">Exporter...</span>
<div style="left:1609.5px;top:775.5px;width:76px;height:22px;background:#f3f3f3;border:1px solid #d0d0d0;border-radius:4.5px;box-sizing:border-box"></div>
<span id="t128" style="font-family:'Liberation Sans', sans-serif;font-size:13px;font-weight:400;color:#b4b4b4;letter-spacing:0.306px;left:1620.00px;top:778.50px;">Retracer</span>
<div style="left:1691px;top:357px;width:11px;height:338px;background:linear-gradient(90deg,#e9e9eb,#f7f7f9 70%)"></div>
<div style="left:1691px;top:695px;width:11px;height:16px;background:#dcdcdc"></div>
<div style="left:1691px;top:711px;width:11px;height:1px;background:#b9b9b9"></div>
<div style="left:1691px;top:712px;width:11px;height:55px;background:#e6e6e6"></div>
<div style="left:1691px;top:767px;width:11px;height:1px;background:#b0b0b0"></div>
<div style="left:1691px;top:768px;width:11px;height:18px;background:#e9e9e9"></div>
<svg style="left:1691px;top:775px" width="11" height="11" viewBox="0 0 11 11"><path d="M1 11 L11 1 M5 11 L11 5 M9 11 L11 9" stroke="#9a9a9a" stroke-width="1"/></svg>
</div></body></html>
